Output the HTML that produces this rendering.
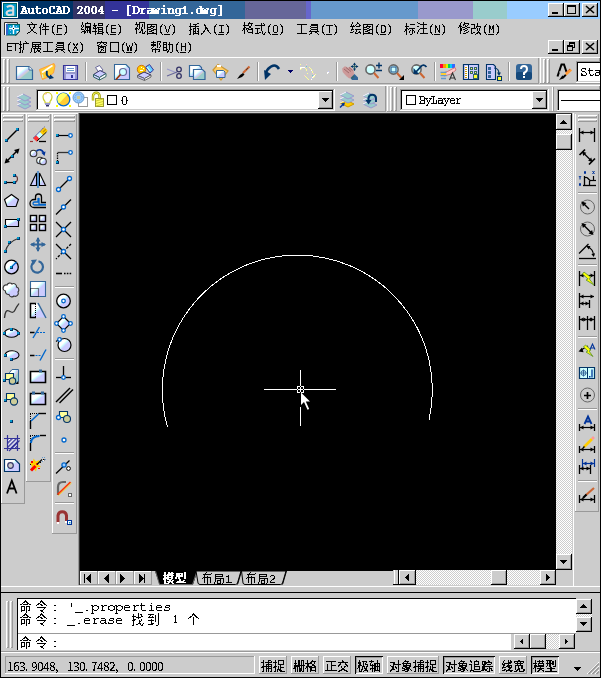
<!DOCTYPE html>
<html><head><meta charset="utf-8"><title>AutoCAD 2004 - [Drawing1.dwg]</title><style>
html,body{margin:0;padding:0;}
body{width:601px;height:678px;position:relative;overflow:hidden;background:#cccccc;font-family:"Liberation Sans",sans-serif;}
div{position:absolute;box-sizing:border-box;}
svg{position:absolute;overflow:visible;}
</style></head><body>
<div style="left:0px;top:0px;width:601px;height:678px;background:#cccccc;"></div>
<div style="left:1px;top:1px;width:72px;height:18px;background:#003366;"></div>
<div style="left:73px;top:1px;width:32px;height:18px;background:#333366;"></div>
<div style="left:105px;top:1px;width:44px;height:18px;background:#333399;"></div>
<div style="left:149px;top:1px;width:96px;height:18px;background:#336699;"></div>
<div style="left:245px;top:1px;width:61px;height:18px;background:#666699;"></div>
<div style="left:306px;top:1px;width:5px;height:18px;background:#6666cc;"></div>
<div style="left:311px;top:1px;width:107px;height:18px;background:#6699cc;"></div>
<div style="left:418px;top:1px;width:55px;height:18px;background:#9999cc;"></div>
<div style="left:473px;top:1px;width:34px;height:18px;background:#99cccc;"></div>
<div style="left:507px;top:1px;width:93px;height:18px;background:#99ccff;"></div>
<div style="left:0px;top:0px;width:601px;height:1px;background:#000000;"></div>
<div style="left:0px;top:0px;width:1px;height:678px;background:#000000;"></div>
<div style="left:600px;top:0px;width:1px;height:678px;background:#000000;"></div>
<div style="left:0px;top:677px;width:601px;height:1px;background:#000000;"></div>
<div style="left:548px;top:3px;width:16px;height:14px;background:#cccccc;"></div>
<div style="left:548px;top:3px;width:16px;height:1px;background:#ffffff;"></div>
<div style="left:548px;top:3px;width:1px;height:14px;background:#ffffff;"></div>
<div style="left:548px;top:16px;width:16px;height:1px;background:#000000;"></div>
<div style="left:563px;top:3px;width:1px;height:14px;background:#000000;"></div>
<div style="left:549px;top:15px;width:14px;height:1px;background:#999999;"></div>
<div style="left:562px;top:4px;width:1px;height:12px;background:#999999;"></div>
<div style="left:564px;top:3px;width:16px;height:14px;background:#cccccc;"></div>
<div style="left:564px;top:3px;width:16px;height:1px;background:#ffffff;"></div>
<div style="left:564px;top:3px;width:1px;height:14px;background:#ffffff;"></div>
<div style="left:564px;top:16px;width:16px;height:1px;background:#000000;"></div>
<div style="left:579px;top:3px;width:1px;height:14px;background:#000000;"></div>
<div style="left:565px;top:15px;width:14px;height:1px;background:#999999;"></div>
<div style="left:578px;top:4px;width:1px;height:12px;background:#999999;"></div>
<div style="left:582px;top:3px;width:16px;height:14px;background:#cccccc;"></div>
<div style="left:582px;top:3px;width:16px;height:1px;background:#ffffff;"></div>
<div style="left:582px;top:3px;width:1px;height:14px;background:#ffffff;"></div>
<div style="left:582px;top:16px;width:16px;height:1px;background:#000000;"></div>
<div style="left:597px;top:3px;width:1px;height:14px;background:#000000;"></div>
<div style="left:583px;top:15px;width:14px;height:1px;background:#999999;"></div>
<div style="left:596px;top:4px;width:1px;height:12px;background:#999999;"></div>
<div style="left:552px;top:12px;width:6px;height:2px;background:#000000;"></div>
<svg style="left:564px;top:3px" width="16" height="14" viewBox="0 0 16 14"><path d="M3.5 2.5h8v8h-8z" stroke="#000" fill="none" shape-rendering="crispEdges"/><path d="M3 3h9" stroke="#000" shape-rendering="crispEdges"/></svg>
<svg style="left:582px;top:3px" width="16" height="14" viewBox="0 0 16 14"><path d="M4 3l8 7M12 3l-8 7" stroke="#000" stroke-width="1.6" fill="none"/></svg>
<div style="left:548px;top:40px;width:16px;height:14px;background:#cccccc;"></div>
<div style="left:548px;top:40px;width:16px;height:1px;background:#ffffff;"></div>
<div style="left:548px;top:40px;width:1px;height:14px;background:#ffffff;"></div>
<div style="left:548px;top:53px;width:16px;height:1px;background:#000000;"></div>
<div style="left:563px;top:40px;width:1px;height:14px;background:#000000;"></div>
<div style="left:549px;top:52px;width:14px;height:1px;background:#999999;"></div>
<div style="left:562px;top:41px;width:1px;height:12px;background:#999999;"></div>
<div style="left:564px;top:40px;width:16px;height:14px;background:#cccccc;"></div>
<div style="left:564px;top:40px;width:16px;height:1px;background:#ffffff;"></div>
<div style="left:564px;top:40px;width:1px;height:14px;background:#ffffff;"></div>
<div style="left:564px;top:53px;width:16px;height:1px;background:#000000;"></div>
<div style="left:579px;top:40px;width:1px;height:14px;background:#000000;"></div>
<div style="left:565px;top:52px;width:14px;height:1px;background:#999999;"></div>
<div style="left:578px;top:41px;width:1px;height:12px;background:#999999;"></div>
<div style="left:582px;top:40px;width:16px;height:14px;background:#cccccc;"></div>
<div style="left:582px;top:40px;width:16px;height:1px;background:#ffffff;"></div>
<div style="left:582px;top:40px;width:1px;height:14px;background:#ffffff;"></div>
<div style="left:582px;top:53px;width:16px;height:1px;background:#000000;"></div>
<div style="left:597px;top:40px;width:1px;height:14px;background:#000000;"></div>
<div style="left:583px;top:52px;width:14px;height:1px;background:#999999;"></div>
<div style="left:596px;top:41px;width:1px;height:12px;background:#999999;"></div>
<div style="left:552px;top:49px;width:6px;height:2px;background:#000000;"></div>
<svg style="left:564px;top:40px" width="16" height="14" viewBox="0 0 16 14"><path d="M5 2h6v2h-6zM5 4h1v1h-1zM10 4h1v4h-1zM9 7h1v1h-1zM3 5h6v2h-6zM3 7h1v4h-1zM8 7h1v4h-1zM3 10h6v1h-6z" fill="#000"/></svg>
<svg style="left:582px;top:40px" width="16" height="14" viewBox="0 0 16 14"><path d="M4 3l8 7M12 3l-8 7" stroke="#000" stroke-width="1.6" fill="none"/></svg>
<div style="left:1px;top:57px;width:599px;height:1px;background:#ffffff;"></div>
<div style="left:538px;top:58px;width:1px;height:26px;background:#999999;"></div>
<div style="left:1px;top:83px;width:538px;height:1px;background:#999999;"></div>
<div style="left:3px;top:59px;width:1px;height:24px;background:#ffffff;"></div>
<div style="left:5px;top:59px;width:1px;height:24px;background:#999999;"></div>
<div style="left:3px;top:59px;width:2px;height:1px;background:#ffffff;"></div>
<div style="left:4px;top:82px;width:2px;height:1px;background:#999999;"></div>
<div style="left:7px;top:59px;width:1px;height:24px;background:#ffffff;"></div>
<div style="left:9px;top:59px;width:1px;height:24px;background:#999999;"></div>
<div style="left:7px;top:59px;width:2px;height:1px;background:#ffffff;"></div>
<div style="left:8px;top:82px;width:2px;height:1px;background:#999999;"></div>
<div style="left:540px;top:58px;width:1px;height:26px;background:#ffffff;"></div>
<div style="left:599px;top:58px;width:1px;height:26px;background:#999999;"></div>
<div style="left:540px;top:83px;width:60px;height:1px;background:#999999;"></div>
<div style="left:543px;top:59px;width:1px;height:24px;background:#ffffff;"></div>
<div style="left:545px;top:59px;width:1px;height:24px;background:#999999;"></div>
<div style="left:543px;top:59px;width:2px;height:1px;background:#ffffff;"></div>
<div style="left:544px;top:82px;width:2px;height:1px;background:#999999;"></div>
<div style="left:547px;top:59px;width:1px;height:24px;background:#ffffff;"></div>
<div style="left:549px;top:59px;width:1px;height:24px;background:#999999;"></div>
<div style="left:547px;top:59px;width:2px;height:1px;background:#ffffff;"></div>
<div style="left:548px;top:82px;width:2px;height:1px;background:#999999;"></div>
<div style="left:1px;top:85px;width:599px;height:1px;background:#ffffff;"></div>
<div style="left:385px;top:86px;width:1px;height:26px;background:#999999;"></div>
<div style="left:1px;top:111px;width:385px;height:1px;background:#999999;"></div>
<div style="left:3px;top:87px;width:1px;height:24px;background:#ffffff;"></div>
<div style="left:5px;top:87px;width:1px;height:24px;background:#999999;"></div>
<div style="left:3px;top:87px;width:2px;height:1px;background:#ffffff;"></div>
<div style="left:4px;top:110px;width:2px;height:1px;background:#999999;"></div>
<div style="left:7px;top:87px;width:1px;height:24px;background:#ffffff;"></div>
<div style="left:9px;top:87px;width:1px;height:24px;background:#999999;"></div>
<div style="left:7px;top:87px;width:2px;height:1px;background:#ffffff;"></div>
<div style="left:8px;top:110px;width:2px;height:1px;background:#999999;"></div>
<div style="left:387px;top:86px;width:1px;height:26px;background:#ffffff;"></div>
<div style="left:599px;top:86px;width:1px;height:26px;background:#999999;"></div>
<div style="left:387px;top:111px;width:213px;height:1px;background:#999999;"></div>
<div style="left:390px;top:87px;width:1px;height:24px;background:#ffffff;"></div>
<div style="left:392px;top:87px;width:1px;height:24px;background:#999999;"></div>
<div style="left:390px;top:87px;width:2px;height:1px;background:#ffffff;"></div>
<div style="left:391px;top:110px;width:2px;height:1px;background:#999999;"></div>
<div style="left:394px;top:87px;width:1px;height:24px;background:#ffffff;"></div>
<div style="left:396px;top:87px;width:1px;height:24px;background:#999999;"></div>
<div style="left:394px;top:87px;width:2px;height:1px;background:#ffffff;"></div>
<div style="left:395px;top:110px;width:2px;height:1px;background:#999999;"></div>
<div style="left:85px;top:62px;width:1px;height:19px;background:#999999;"></div>
<div style="left:86px;top:62px;width:1px;height:19px;background:#ffffff;"></div>
<div style="left:160px;top:62px;width:1px;height:19px;background:#999999;"></div>
<div style="left:161px;top:62px;width:1px;height:19px;background:#ffffff;"></div>
<div style="left:257px;top:62px;width:1px;height:19px;background:#999999;"></div>
<div style="left:258px;top:62px;width:1px;height:19px;background:#ffffff;"></div>
<div style="left:336px;top:62px;width:1px;height:19px;background:#999999;"></div>
<div style="left:337px;top:62px;width:1px;height:19px;background:#ffffff;"></div>
<div style="left:434px;top:62px;width:1px;height:19px;background:#999999;"></div>
<div style="left:435px;top:62px;width:1px;height:19px;background:#ffffff;"></div>
<div style="left:508px;top:62px;width:1px;height:19px;background:#999999;"></div>
<div style="left:509px;top:62px;width:1px;height:19px;background:#ffffff;"></div>
<div style="left:576px;top:61px;width:24px;height:22px;background:#ffffff;"></div>
<div style="left:576px;top:61px;width:24px;height:1px;background:#999999;"></div>
<div style="left:576px;top:61px;width:1px;height:22px;background:#999999;"></div>
<div style="left:577px;top:62px;width:23px;height:1px;background:#000000;"></div>
<div style="left:577px;top:62px;width:1px;height:20px;background:#000000;"></div>
<div style="left:577px;top:81px;width:23px;height:1px;background:#cccccc;"></div>
<div style="left:576px;top:82px;width:24px;height:1px;background:#ffffff;"></div>
<div style="left:36px;top:89px;width:299px;height:22px;background:#ffffff;"></div>
<div style="left:36px;top:89px;width:299px;height:1px;background:#999999;"></div>
<div style="left:36px;top:89px;width:1px;height:22px;background:#999999;"></div>
<div style="left:37px;top:90px;width:297px;height:1px;background:#000000;"></div>
<div style="left:37px;top:90px;width:1px;height:20px;background:#000000;"></div>
<div style="left:36px;top:110px;width:299px;height:1px;background:#ffffff;"></div>
<div style="left:334px;top:89px;width:1px;height:22px;background:#ffffff;"></div>
<div style="left:37px;top:109px;width:297px;height:1px;background:#cccccc;"></div>
<div style="left:333px;top:90px;width:1px;height:20px;background:#cccccc;"></div>
<div style="left:318px;top:91px;width:15px;height:18px;background:#cccccc;"></div>
<div style="left:318px;top:91px;width:15px;height:1px;background:#ffffff;"></div>
<div style="left:318px;top:91px;width:1px;height:18px;background:#ffffff;"></div>
<div style="left:318px;top:108px;width:15px;height:1px;background:#000000;"></div>
<div style="left:332px;top:91px;width:1px;height:18px;background:#000000;"></div>
<div style="left:319px;top:107px;width:13px;height:1px;background:#999999;"></div>
<div style="left:331px;top:92px;width:1px;height:16px;background:#999999;"></div>
<svg style="left:0px;top:0px" width="601" height="678" viewBox="0 0 601 678"><path fill="#000000" d="M322 98h7v1h-7zM323 99h5v1h-5zM324 100h3v1h-3zM325 101h1v1h-1z"/></svg>
<div style="left:400px;top:89px;width:149px;height:22px;background:#ffffff;"></div>
<div style="left:400px;top:89px;width:149px;height:1px;background:#999999;"></div>
<div style="left:400px;top:89px;width:1px;height:22px;background:#999999;"></div>
<div style="left:401px;top:90px;width:147px;height:1px;background:#000000;"></div>
<div style="left:401px;top:90px;width:1px;height:20px;background:#000000;"></div>
<div style="left:400px;top:110px;width:149px;height:1px;background:#ffffff;"></div>
<div style="left:548px;top:89px;width:1px;height:22px;background:#ffffff;"></div>
<div style="left:401px;top:109px;width:147px;height:1px;background:#cccccc;"></div>
<div style="left:547px;top:90px;width:1px;height:20px;background:#cccccc;"></div>
<div style="left:532px;top:91px;width:15px;height:18px;background:#cccccc;"></div>
<div style="left:532px;top:91px;width:15px;height:1px;background:#ffffff;"></div>
<div style="left:532px;top:91px;width:1px;height:18px;background:#ffffff;"></div>
<div style="left:532px;top:108px;width:15px;height:1px;background:#000000;"></div>
<div style="left:546px;top:91px;width:1px;height:18px;background:#000000;"></div>
<div style="left:533px;top:107px;width:13px;height:1px;background:#999999;"></div>
<div style="left:545px;top:92px;width:1px;height:16px;background:#999999;"></div>
<svg style="left:0px;top:0px" width="601" height="678" viewBox="0 0 601 678"><path fill="#000000" d="M536 98h7v1h-7zM537 99h5v1h-5zM538 100h3v1h-3zM539 101h1v1h-1z"/></svg>
<div style="left:406px;top:95px;width:10px;height:10px;background:#000000;"></div>
<div style="left:407px;top:96px;width:8px;height:8px;background:#ffffff;"></div>
<div style="left:552px;top:87px;width:1px;height:24px;background:#ffffff;"></div>
<div style="left:553px;top:87px;width:1px;height:24px;background:#999999;"></div>
<div style="left:557px;top:89px;width:43px;height:22px;background:#ffffff;"></div>
<div style="left:557px;top:89px;width:43px;height:1px;background:#999999;"></div>
<div style="left:557px;top:89px;width:1px;height:22px;background:#999999;"></div>
<div style="left:558px;top:90px;width:42px;height:1px;background:#000000;"></div>
<div style="left:558px;top:90px;width:1px;height:20px;background:#000000;"></div>
<div style="left:557px;top:110px;width:43px;height:1px;background:#ffffff;"></div>
<div style="left:561px;top:100px;width:39px;height:1px;background:#000000;"></div>
<div style="left:1px;top:113px;width:78px;height:1px;background:#ffffff;"></div>
<div style="left:1px;top:114px;width:1px;height:390px;background:#ffffff;"></div>
<div style="left:24px;top:114px;width:1px;height:390px;background:#999999;"></div>
<div style="left:1px;top:503px;width:24px;height:1px;background:#999999;"></div>
<div style="left:3px;top:115px;width:20px;height:1px;background:#ffffff;"></div>
<div style="left:3px;top:117px;width:20px;height:1px;background:#999999;"></div>
<div style="left:3px;top:115px;width:1px;height:2px;background:#ffffff;"></div>
<div style="left:22px;top:116px;width:1px;height:2px;background:#999999;"></div>
<div style="left:3px;top:119px;width:20px;height:1px;background:#ffffff;"></div>
<div style="left:3px;top:121px;width:20px;height:1px;background:#999999;"></div>
<div style="left:3px;top:119px;width:1px;height:2px;background:#ffffff;"></div>
<div style="left:22px;top:120px;width:1px;height:2px;background:#999999;"></div>
<div style="left:26px;top:114px;width:1px;height:368px;background:#ffffff;"></div>
<div style="left:50px;top:114px;width:1px;height:368px;background:#999999;"></div>
<div style="left:26px;top:481px;width:25px;height:1px;background:#999999;"></div>
<div style="left:28px;top:115px;width:21px;height:1px;background:#ffffff;"></div>
<div style="left:28px;top:117px;width:21px;height:1px;background:#999999;"></div>
<div style="left:28px;top:115px;width:1px;height:2px;background:#ffffff;"></div>
<div style="left:48px;top:116px;width:1px;height:2px;background:#999999;"></div>
<div style="left:28px;top:119px;width:21px;height:1px;background:#ffffff;"></div>
<div style="left:28px;top:121px;width:21px;height:1px;background:#999999;"></div>
<div style="left:28px;top:119px;width:1px;height:2px;background:#ffffff;"></div>
<div style="left:48px;top:120px;width:1px;height:2px;background:#999999;"></div>
<div style="left:52px;top:114px;width:1px;height:420px;background:#ffffff;"></div>
<div style="left:76px;top:114px;width:1px;height:420px;background:#999999;"></div>
<div style="left:52px;top:533px;width:25px;height:1px;background:#999999;"></div>
<div style="left:54px;top:115px;width:21px;height:1px;background:#ffffff;"></div>
<div style="left:54px;top:117px;width:21px;height:1px;background:#999999;"></div>
<div style="left:54px;top:115px;width:1px;height:2px;background:#ffffff;"></div>
<div style="left:74px;top:116px;width:1px;height:2px;background:#999999;"></div>
<div style="left:54px;top:119px;width:21px;height:1px;background:#ffffff;"></div>
<div style="left:54px;top:121px;width:21px;height:1px;background:#999999;"></div>
<div style="left:54px;top:119px;width:1px;height:2px;background:#ffffff;"></div>
<div style="left:74px;top:120px;width:1px;height:2px;background:#999999;"></div>
<div style="left:78px;top:113px;width:1px;height:472px;background:#999999;"></div>
<div style="left:79px;top:113px;width:493px;height:472px;background:#333333;"></div>
<div style="left:80px;top:114px;width:476px;height:457px;background:#000000;"></div>
<div style="left:556px;top:114px;width:16px;height:456px;background:repeating-conic-gradient(#ffffff 0 25%,#cccccc 0 50%) 0 0/2px 2px;"></div>
<div style="left:556px;top:114px;width:16px;height:16px;background:#cccccc;"></div>
<div style="left:556px;top:114px;width:16px;height:1px;background:#ffffff;"></div>
<div style="left:556px;top:114px;width:1px;height:16px;background:#ffffff;"></div>
<div style="left:556px;top:129px;width:16px;height:1px;background:#000000;"></div>
<div style="left:571px;top:114px;width:1px;height:16px;background:#000000;"></div>
<div style="left:557px;top:128px;width:14px;height:1px;background:#999999;"></div>
<div style="left:570px;top:115px;width:1px;height:14px;background:#999999;"></div>
<svg style="left:0px;top:0px" width="601" height="678" viewBox="0 0 601 678"><path fill="#000000" d="M563 120h1v1h-1zM562 121h3v1h-3zM561 122h5v1h-5zM560 123h7v1h-7z"/></svg>
<div style="left:556px;top:134px;width:16px;height:16px;background:#cccccc;"></div>
<div style="left:556px;top:134px;width:16px;height:1px;background:#ffffff;"></div>
<div style="left:556px;top:134px;width:1px;height:16px;background:#ffffff;"></div>
<div style="left:556px;top:149px;width:16px;height:1px;background:#000000;"></div>
<div style="left:571px;top:134px;width:1px;height:16px;background:#000000;"></div>
<div style="left:557px;top:148px;width:14px;height:1px;background:#999999;"></div>
<div style="left:570px;top:135px;width:1px;height:14px;background:#999999;"></div>
<div style="left:556px;top:554px;width:16px;height:16px;background:#cccccc;"></div>
<div style="left:556px;top:554px;width:16px;height:1px;background:#ffffff;"></div>
<div style="left:556px;top:554px;width:1px;height:16px;background:#ffffff;"></div>
<div style="left:556px;top:569px;width:16px;height:1px;background:#000000;"></div>
<div style="left:571px;top:554px;width:1px;height:16px;background:#000000;"></div>
<div style="left:557px;top:568px;width:14px;height:1px;background:#999999;"></div>
<div style="left:570px;top:555px;width:1px;height:14px;background:#999999;"></div>
<svg style="left:0px;top:0px" width="601" height="678" viewBox="0 0 601 678"><path fill="#000000" d="M560 560h7v1h-7zM561 561h5v1h-5zM562 562h3v1h-3zM563 563h1v1h-1z"/></svg>
<div style="left:573px;top:113px;width:1px;height:474px;background:#ffffff;"></div>
<div style="left:575px;top:114px;width:1px;height:398px;background:#ffffff;"></div>
<div style="left:598px;top:114px;width:1px;height:398px;background:#999999;"></div>
<div style="left:575px;top:511px;width:24px;height:1px;background:#999999;"></div>
<div style="left:578px;top:115px;width:19px;height:1px;background:#ffffff;"></div>
<div style="left:578px;top:117px;width:19px;height:1px;background:#999999;"></div>
<div style="left:578px;top:115px;width:1px;height:2px;background:#ffffff;"></div>
<div style="left:596px;top:116px;width:1px;height:2px;background:#999999;"></div>
<div style="left:578px;top:119px;width:19px;height:1px;background:#ffffff;"></div>
<div style="left:578px;top:121px;width:19px;height:1px;background:#999999;"></div>
<div style="left:578px;top:119px;width:1px;height:2px;background:#ffffff;"></div>
<div style="left:596px;top:120px;width:1px;height:2px;background:#999999;"></div>
<div style="left:80px;top:571px;width:314px;height:14px;background:#cccccc;"></div>
<div style="left:80px;top:571px;width:18px;height:14px;background:#cccccc;"></div>
<div style="left:80px;top:571px;width:18px;height:1px;background:#ffffff;"></div>
<div style="left:80px;top:571px;width:1px;height:14px;background:#ffffff;"></div>
<div style="left:80px;top:584px;width:18px;height:1px;background:#999999;"></div>
<div style="left:97px;top:571px;width:1px;height:14px;background:#999999;"></div>
<div style="left:98px;top:571px;width:18px;height:14px;background:#cccccc;"></div>
<div style="left:98px;top:571px;width:18px;height:1px;background:#ffffff;"></div>
<div style="left:98px;top:571px;width:1px;height:14px;background:#ffffff;"></div>
<div style="left:98px;top:584px;width:18px;height:1px;background:#999999;"></div>
<div style="left:115px;top:571px;width:1px;height:14px;background:#999999;"></div>
<div style="left:116px;top:571px;width:18px;height:14px;background:#cccccc;"></div>
<div style="left:116px;top:571px;width:18px;height:1px;background:#ffffff;"></div>
<div style="left:116px;top:571px;width:1px;height:14px;background:#ffffff;"></div>
<div style="left:116px;top:584px;width:18px;height:1px;background:#999999;"></div>
<div style="left:133px;top:571px;width:1px;height:14px;background:#999999;"></div>
<div style="left:134px;top:571px;width:18px;height:14px;background:#cccccc;"></div>
<div style="left:134px;top:571px;width:18px;height:1px;background:#ffffff;"></div>
<div style="left:134px;top:571px;width:1px;height:14px;background:#ffffff;"></div>
<div style="left:134px;top:584px;width:18px;height:1px;background:#999999;"></div>
<div style="left:151px;top:571px;width:1px;height:14px;background:#999999;"></div>
<svg style="left:0px;top:0px" width="601" height="678" viewBox="0 0 601 678"><path fill="#000000" d="M86 578h1v1h-1zM87 577h1v3h-1zM88 576h1v5h-1zM89 575h1v7h-1zM90 574h1v9h-1z"/></svg>
<div style="left:84px;top:574px;width:1px;height:9px;background:#000000;"></div>
<svg style="left:0px;top:0px" width="601" height="678" viewBox="0 0 601 678"><path fill="#000000" d="M104 578h1v1h-1zM105 577h1v3h-1zM106 576h1v5h-1zM107 575h1v7h-1zM108 574h1v9h-1z"/></svg>
<svg style="left:0px;top:0px" width="601" height="678" viewBox="0 0 601 678"><path fill="#000000" d="M124 578h1v1h-1zM123 577h1v3h-1zM122 576h1v5h-1zM121 575h1v7h-1zM120 574h1v9h-1z"/></svg>
<svg style="left:0px;top:0px" width="601" height="678" viewBox="0 0 601 678"><path fill="#000000" d="M143 578h1v1h-1zM142 577h1v3h-1zM141 576h1v5h-1zM140 575h1v7h-1zM139 574h1v9h-1z"/></svg>
<div style="left:144px;top:574px;width:1px;height:9px;background:#000000;"></div>
<div style="left:556px;top:570px;width:17px;height:15px;background:#cccccc;"></div>
<div style="left:394px;top:570px;width:162px;height:15px;background:#cccccc;"></div>
<div style="left:416px;top:570px;width:124px;height:15px;background:repeating-conic-gradient(#ffffff 0 25%,#cccccc 0 50%) 0 0/2px 2px;"></div>
<div style="left:393px;top:570px;width:6px;height:15px;background:#cccccc;"></div>
<div style="left:394px;top:570px;width:1px;height:15px;background:#ffffff;"></div>
<div style="left:398px;top:570px;width:1px;height:15px;background:#000000;"></div>
<div style="left:393px;top:584px;width:6px;height:1px;background:#000000;"></div>
<div style="left:399px;top:570px;width:17px;height:15px;background:#cccccc;"></div>
<div style="left:399px;top:570px;width:17px;height:1px;background:#ffffff;"></div>
<div style="left:399px;top:570px;width:1px;height:15px;background:#ffffff;"></div>
<div style="left:399px;top:584px;width:17px;height:1px;background:#000000;"></div>
<div style="left:415px;top:570px;width:1px;height:15px;background:#000000;"></div>
<div style="left:400px;top:583px;width:15px;height:1px;background:#999999;"></div>
<div style="left:414px;top:571px;width:1px;height:13px;background:#999999;"></div>
<svg style="left:0px;top:0px" width="601" height="678" viewBox="0 0 601 678"><path fill="#000000" d="M405 577h1v1h-1zM406 576h1v3h-1zM407 575h1v5h-1zM408 574h1v7h-1z"/></svg>
<div style="left:491px;top:570px;width:16px;height:15px;background:#cccccc;"></div>
<div style="left:491px;top:570px;width:16px;height:1px;background:#ffffff;"></div>
<div style="left:491px;top:570px;width:1px;height:15px;background:#ffffff;"></div>
<div style="left:491px;top:584px;width:16px;height:1px;background:#000000;"></div>
<div style="left:506px;top:570px;width:1px;height:15px;background:#000000;"></div>
<div style="left:492px;top:583px;width:14px;height:1px;background:#999999;"></div>
<div style="left:505px;top:571px;width:1px;height:13px;background:#999999;"></div>
<div style="left:540px;top:570px;width:16px;height:15px;background:#cccccc;"></div>
<div style="left:540px;top:570px;width:16px;height:1px;background:#ffffff;"></div>
<div style="left:540px;top:570px;width:1px;height:15px;background:#ffffff;"></div>
<div style="left:540px;top:584px;width:16px;height:1px;background:#000000;"></div>
<div style="left:555px;top:570px;width:1px;height:15px;background:#000000;"></div>
<div style="left:541px;top:583px;width:14px;height:1px;background:#999999;"></div>
<div style="left:554px;top:571px;width:1px;height:13px;background:#999999;"></div>
<svg style="left:0px;top:0px" width="601" height="678" viewBox="0 0 601 678"><path fill="#000000" d="M549 577h1v1h-1zM548 576h1v3h-1zM547 575h1v5h-1zM546 574h1v7h-1z"/></svg>
<div style="left:1px;top:586px;width:599px;height:1px;background:#ffffff;"></div>
<svg style="left:0px;top:0px" width="601" height="678" viewBox="0 0 601 678"><path d="M167.5 427 A135 135 0 1 1 429 420" fill="none" stroke="#fff" stroke-width="1" shape-rendering="crispEdges"/>
<path d="M264 389.5H336M300.5 370V392.5M300.5 407V426" stroke="#fff" stroke-width="1" shape-rendering="crispEdges"/>
<rect x="297.5" y="386.5" width="6" height="6" fill="none" stroke="#fff" stroke-width="1" shape-rendering="crispEdges"/>
<path d="M300 386h1v1h-1zM300 392h1v1h-1zM297 389h1v1h-1zM303 389h1v1h-1z" fill="#000"/>
<path d="M301 392.5L301 405L304 402L307.5 409.8L309.2 409L305.8 401.5L310 401.5Z" fill="#fff"/></svg>
<div style="left:1px;top:592px;width:599px;height:1px;background:#000000;"></div>
<div style="left:17px;top:598px;width:559px;height:52px;background:#ffffff;"></div>
<div style="left:17px;top:598px;width:559px;height:1px;background:#000000;"></div>
<div style="left:17px;top:598px;width:1px;height:52px;background:#000000;"></div>
<div style="left:18px;top:633px;width:558px;height:1px;background:#999999;"></div>
<div style="left:6px;top:601px;width:1px;height:47px;background:#ffffff;"></div>
<div style="left:8px;top:601px;width:1px;height:47px;background:#999999;"></div>
<div style="left:6px;top:601px;width:2px;height:1px;background:#ffffff;"></div>
<div style="left:7px;top:647px;width:2px;height:1px;background:#999999;"></div>
<div style="left:10px;top:601px;width:1px;height:47px;background:#ffffff;"></div>
<div style="left:12px;top:601px;width:1px;height:47px;background:#999999;"></div>
<div style="left:10px;top:601px;width:2px;height:1px;background:#ffffff;"></div>
<div style="left:11px;top:647px;width:2px;height:1px;background:#999999;"></div>
<div style="left:576px;top:598px;width:24px;height:36px;background:#cccccc;"></div>
<div style="left:576px;top:599px;width:16px;height:15px;background:#cccccc;"></div>
<div style="left:576px;top:599px;width:16px;height:1px;background:#ffffff;"></div>
<div style="left:576px;top:599px;width:1px;height:15px;background:#ffffff;"></div>
<div style="left:576px;top:613px;width:16px;height:1px;background:#000000;"></div>
<div style="left:591px;top:599px;width:1px;height:15px;background:#000000;"></div>
<div style="left:577px;top:612px;width:14px;height:1px;background:#999999;"></div>
<div style="left:590px;top:600px;width:1px;height:13px;background:#999999;"></div>
<svg style="left:0px;top:0px" width="601" height="678" viewBox="0 0 601 678"><path fill="#000000" d="M583 604h1v1h-1zM582 605h3v1h-3zM581 606h5v1h-5zM580 607h7v1h-7z"/></svg>
<div style="left:576px;top:614px;width:16px;height:3px;background:repeating-conic-gradient(#ffffff 0 25%,#cccccc 0 50%) 0 0/2px 2px;"></div>
<div style="left:576px;top:617px;width:16px;height:15px;background:#cccccc;"></div>
<div style="left:576px;top:617px;width:16px;height:1px;background:#ffffff;"></div>
<div style="left:576px;top:617px;width:1px;height:15px;background:#ffffff;"></div>
<div style="left:576px;top:631px;width:16px;height:1px;background:#000000;"></div>
<div style="left:591px;top:617px;width:1px;height:15px;background:#000000;"></div>
<div style="left:577px;top:630px;width:14px;height:1px;background:#999999;"></div>
<div style="left:590px;top:618px;width:1px;height:13px;background:#999999;"></div>
<svg style="left:0px;top:0px" width="601" height="678" viewBox="0 0 601 678"><path fill="#000000" d="M580 622h7v1h-7zM581 623h5v1h-5zM582 624h3v1h-3zM583 625h1v1h-1z"/></svg>
<div style="left:511px;top:634px;width:65px;height:16px;background:#cccccc;"></div>
<div style="left:514px;top:634px;width:16px;height:15px;background:#cccccc;"></div>
<div style="left:514px;top:634px;width:16px;height:1px;background:#ffffff;"></div>
<div style="left:514px;top:634px;width:1px;height:15px;background:#ffffff;"></div>
<div style="left:514px;top:648px;width:16px;height:1px;background:#000000;"></div>
<div style="left:529px;top:634px;width:1px;height:15px;background:#000000;"></div>
<div style="left:515px;top:647px;width:14px;height:1px;background:#999999;"></div>
<div style="left:528px;top:635px;width:1px;height:13px;background:#999999;"></div>
<svg style="left:0px;top:0px" width="601" height="678" viewBox="0 0 601 678"><path fill="#000000" d="M520 641h1v1h-1zM521 640h1v3h-1zM522 639h1v5h-1z"/></svg>
<div style="left:530px;top:634px;width:16px;height:15px;background:#cccccc;"></div>
<div style="left:530px;top:634px;width:16px;height:1px;background:#ffffff;"></div>
<div style="left:530px;top:634px;width:1px;height:15px;background:#ffffff;"></div>
<div style="left:530px;top:648px;width:16px;height:1px;background:#000000;"></div>
<div style="left:545px;top:634px;width:1px;height:15px;background:#000000;"></div>
<div style="left:531px;top:647px;width:14px;height:1px;background:#999999;"></div>
<div style="left:544px;top:635px;width:1px;height:13px;background:#999999;"></div>
<div style="left:546px;top:634px;width:13px;height:15px;background:repeating-conic-gradient(#ffffff 0 25%,#cccccc 0 50%) 0 0/2px 2px;"></div>
<div style="left:559px;top:634px;width:16px;height:15px;background:#cccccc;"></div>
<div style="left:559px;top:634px;width:16px;height:1px;background:#ffffff;"></div>
<div style="left:559px;top:634px;width:1px;height:15px;background:#ffffff;"></div>
<div style="left:559px;top:648px;width:16px;height:1px;background:#000000;"></div>
<div style="left:574px;top:634px;width:1px;height:15px;background:#000000;"></div>
<div style="left:560px;top:647px;width:14px;height:1px;background:#999999;"></div>
<div style="left:573px;top:635px;width:1px;height:13px;background:#999999;"></div>
<svg style="left:0px;top:0px" width="601" height="678" viewBox="0 0 601 678"><path fill="#000000" d="M567 641h1v1h-1zM566 640h1v3h-1zM565 639h1v5h-1z"/></svg>
<div style="left:1px;top:651px;width:599px;height:1px;background:#999999;"></div>
<div style="left:1px;top:652px;width:599px;height:1px;background:#ffffff;"></div>
<div style="left:5px;top:656px;width:250px;height:18px;background:#cccccc;"></div>
<div style="left:5px;top:656px;width:250px;height:1px;background:#999999;"></div>
<div style="left:5px;top:656px;width:1px;height:18px;background:#999999;"></div>
<div style="left:5px;top:673px;width:250px;height:1px;background:#ffffff;"></div>
<div style="left:254px;top:656px;width:1px;height:18px;background:#ffffff;"></div>
<div style="left:259px;top:656px;width:28px;height:18px;background:#cccccc;"></div>
<div style="left:259px;top:656px;width:28px;height:1px;background:#ffffff;"></div>
<div style="left:259px;top:656px;width:1px;height:18px;background:#ffffff;"></div>
<div style="left:259px;top:673px;width:28px;height:1px;background:#999999;"></div>
<div style="left:286px;top:656px;width:1px;height:18px;background:#999999;"></div>
<div style="left:291px;top:656px;width:28px;height:18px;background:#cccccc;"></div>
<div style="left:291px;top:656px;width:28px;height:1px;background:#ffffff;"></div>
<div style="left:291px;top:656px;width:1px;height:18px;background:#ffffff;"></div>
<div style="left:291px;top:673px;width:28px;height:1px;background:#999999;"></div>
<div style="left:318px;top:656px;width:1px;height:18px;background:#999999;"></div>
<div style="left:323px;top:656px;width:28px;height:18px;background:#cccccc;"></div>
<div style="left:323px;top:656px;width:28px;height:1px;background:#ffffff;"></div>
<div style="left:323px;top:656px;width:1px;height:18px;background:#ffffff;"></div>
<div style="left:323px;top:673px;width:28px;height:1px;background:#999999;"></div>
<div style="left:350px;top:656px;width:1px;height:18px;background:#999999;"></div>
<div style="left:355px;top:656px;width:28px;height:18px;background:#ffffff;"></div>
<div style="left:355px;top:656px;width:28px;height:1px;background:#000000;"></div>
<div style="left:355px;top:656px;width:1px;height:18px;background:#000000;"></div>
<div style="left:356px;top:657px;width:26px;height:1px;background:#999999;"></div>
<div style="left:356px;top:657px;width:1px;height:16px;background:#999999;"></div>
<div style="left:357px;top:658px;width:25px;height:15px;background:#cccccc;"></div>
<div style="left:387px;top:656px;width:52px;height:18px;background:#cccccc;"></div>
<div style="left:387px;top:656px;width:52px;height:1px;background:#ffffff;"></div>
<div style="left:387px;top:656px;width:1px;height:18px;background:#ffffff;"></div>
<div style="left:387px;top:673px;width:52px;height:1px;background:#999999;"></div>
<div style="left:438px;top:656px;width:1px;height:18px;background:#999999;"></div>
<div style="left:443px;top:656px;width:52px;height:18px;background:#ffffff;"></div>
<div style="left:443px;top:656px;width:52px;height:1px;background:#000000;"></div>
<div style="left:443px;top:656px;width:1px;height:18px;background:#000000;"></div>
<div style="left:444px;top:657px;width:50px;height:1px;background:#999999;"></div>
<div style="left:444px;top:657px;width:1px;height:16px;background:#999999;"></div>
<div style="left:445px;top:658px;width:49px;height:15px;background:#cccccc;"></div>
<div style="left:499px;top:656px;width:28px;height:18px;background:#cccccc;"></div>
<div style="left:499px;top:656px;width:28px;height:1px;background:#ffffff;"></div>
<div style="left:499px;top:656px;width:1px;height:18px;background:#ffffff;"></div>
<div style="left:499px;top:673px;width:28px;height:1px;background:#999999;"></div>
<div style="left:526px;top:656px;width:1px;height:18px;background:#999999;"></div>
<div style="left:531px;top:656px;width:28px;height:18px;background:#ffffff;"></div>
<div style="left:531px;top:656px;width:28px;height:1px;background:#000000;"></div>
<div style="left:531px;top:656px;width:1px;height:18px;background:#000000;"></div>
<div style="left:532px;top:657px;width:26px;height:1px;background:#999999;"></div>
<div style="left:532px;top:657px;width:1px;height:16px;background:#999999;"></div>
<div style="left:533px;top:658px;width:25px;height:15px;background:#cccccc;"></div>
<svg style="left:0px;top:0px" width="601" height="678" viewBox="0 0 601 678"><path fill="#000000" d="M574 667h7v1h-7zM575 668h5v1h-5zM576 669h3v1h-3zM577 670h1v1h-1z"/></svg>
<svg style="left:586px;top:661px" width="14" height="14" viewBox="0 0 14 14"><path d="M1 13L13 1M5 13L13 5M9 13L13 9" stroke="#fff" stroke-width="1" fill="none"/><path d="M2.5 13L13 2.5M6.5 13L13 6.5M10.5 13L13 10.5" stroke="#999" stroke-width="1.6" fill="none"/></svg>
<svg style="left:0;top:0" width="601" height="678" viewBox="0 0 601 678"><defs>
<linearGradient id="gL" x1="0" y1="0" x2="1" y2="1">
<stop offset="0" stop-color="#ffffff"/><stop offset="0.38" stop-color="#ffffff"/><stop offset="0.45" stop-color="#ccffff"/><stop offset="0.55" stop-color="#ccccff"/><stop offset="1" stop-color="#ccccff"/></linearGradient>
<linearGradient id="gT" x1="0" y1="0" x2="1" y2="1">
<stop offset="0" stop-color="#ffffff"/><stop offset="0.3" stop-color="#ffffff"/><stop offset="0.38" stop-color="#ccffff"/><stop offset="0.45" stop-color="#ccccff"/><stop offset="0.55" stop-color="#cccccc"/><stop offset="0.6" stop-color="#99cccc"/><stop offset="1" stop-color="#99cccc"/></linearGradient>
<pattern id="hatch" width="3" height="3" patternUnits="userSpaceOnUse" patternTransform="rotate(45)"><rect width="3" height="3" fill="#ffffff"/><rect width="1.5" height="3" fill="#333399"/></pattern>
</defs><path d="M6.5 140.5L17.5 129.5" stroke="#000" stroke-width="1.4" fill="none" /><rect x="5" y="139" width="3" height="3" fill="#003366"/><rect x="5" y="139" width="2" height="2" fill="#0099cc"/><rect x="16" y="128" width="3" height="3" fill="#003366"/><rect x="16" y="128" width="2" height="2" fill="#0099cc"/><path d="M6 162L18 150" stroke="#000" stroke-width="1.4" fill="none" /><path d="M4.50 163.50L6.09 158.02L9.98 161.91Z" fill="#000"/><path d="M19.50 148.50L17.91 153.98L14.02 150.09Z" fill="#000"/><rect x="11" y="155" width="3" height="3" fill="#003366"/><rect x="11" y="155" width="2" height="2" fill="#0099cc"/><path d="M5 182.5L14 182.5" stroke="#000" stroke-width="1.2" fill="none" /><path d="M14 175.5A3.5 3.5 0 0 1 14 182.5" fill="none" stroke="#663333" stroke-width="1.2" /><rect x="4" y="181" width="3" height="3" fill="#003366"/><rect x="4" y="181" width="2" height="2" fill="#0099cc"/><rect x="13" y="181" width="3" height="3" fill="#003366"/><rect x="13" y="181" width="2" height="2" fill="#0099cc"/><rect x="13" y="174" width="3" height="3" fill="#003366"/><rect x="13" y="174" width="2" height="2" fill="#0099cc"/><path d="M11.5 194.5L18.5 199.5L16 206.5L7 206.5L4.5 199.5Z" fill="url(#gL)" stroke="#000" stroke-width="1.1" /><path d="M5.5 219.5h13v7h-13z" fill="url(#gL)" stroke="#000" stroke-width="1.1" /><rect x="4" y="225" width="3" height="3" fill="#003366"/><rect x="4" y="225" width="2" height="2" fill="#0099cc"/><rect x="17" y="218" width="3" height="3" fill="#003366"/><rect x="17" y="218" width="2" height="2" fill="#0099cc"/><path d="M5.5 251Q8 242 18 238.5" fill="none" stroke="#333" stroke-width="1.2" /><rect x="4" y="250" width="3" height="3" fill="#003366"/><rect x="4" y="250" width="2" height="2" fill="#0099cc"/><rect x="8" y="241" width="3" height="3" fill="#003366"/><rect x="8" y="241" width="2" height="2" fill="#0099cc"/><rect x="17" y="237" width="3" height="3" fill="#003366"/><rect x="17" y="237" width="2" height="2" fill="#0099cc"/><circle cx="11.5" cy="267" r="6.8" fill="url(#gL)" stroke="#000" stroke-width="1.3"/><path d="M11.5 267L16.5 262" stroke="#0066cc" stroke-width="1.4" fill="none" /><rect x="10" y="266" width="3" height="3" fill="#003366"/><rect x="10" y="266" width="2" height="2" fill="#0099cc"/><path d="M7 285A3 3 0 0 1 12 284A3 3 0 0 1 16.5 287A3 3 0 0 1 18 292A3 3 0 0 1 14 296A3 3 0 0 1 9 294.5A3 3 0 0 1 5.5 291A3 3 0 0 1 7 285Z" fill="url(#gL)" stroke="#333" stroke-width="1.1" /><path d="M4.5 318C5 312 6.5 309.5 9 311S13.5 313.5 15 310S17.5 306 19 303.5" fill="none" stroke="#333" stroke-width="1.3" /><ellipse cx="11.5" cy="333" rx="7" ry="4.3" fill="url(#gL)" stroke="#000" stroke-width="1.1"/><rect x="3" y="332" width="3" height="3" fill="#003366"/><rect x="3" y="332" width="2" height="2" fill="#0099cc"/><rect x="17" y="332" width="3" height="3" fill="#003366"/><rect x="17" y="332" width="2" height="2" fill="#0099cc"/><rect x="10" y="328" width="3" height="3" fill="#003366"/><rect x="10" y="328" width="2" height="2" fill="#0099cc"/><path d="M5 355A7 4.3 0 1 1 11.5 359.3" fill="url(#gL)" stroke="#000" stroke-width="1.1" /><rect x="4" y="354" width="3" height="3" fill="#003366"/><rect x="4" y="354" width="2" height="2" fill="#0099cc"/><rect x="10" y="358" width="3" height="3" fill="#003366"/><rect x="10" y="358" width="2" height="2" fill="#0099cc"/><path d="M9.5 372.5L12 369.5H18.5V381L15.5 384H9.5Z" fill="url(#gT)" stroke="#336699" stroke-width="1" /><path d="M15.5 384L18.5 381V384Z" fill="#000" stroke="none" stroke-width="1" /><path d="M5.5 373.5h8v6h-8z" fill="#ffff99" stroke="#003366" stroke-width="1.1" /><circle cx="12.5" cy="381" r="3.2" fill="#cccc99" stroke="#003366" stroke-width="1.1"/><rect x="3" y="379" width="3" height="3" fill="#003366"/><rect x="3" y="379" width="2" height="2" fill="#0099cc"/><path d="M6.5 393.5h8v6h-8z" fill="#ffff99" stroke="#003366" stroke-width="1.1" /><circle cx="14" cy="401.5" r="3.6" fill="#cccc99" stroke="#003366" stroke-width="1.1"/><rect x="4" y="399" width="3" height="3" fill="#003366"/><rect x="4" y="399" width="2" height="2" fill="#0099cc"/><rect x="10" y="420" width="3" height="3" fill="#003366"/><rect x="10" y="420" width="2" height="2" fill="#0099cc"/><path d="M7 438h10v10h-10z" fill="url(#hatch)" stroke="none" stroke-width="1" /><path d="M4 438.5H20M4 448.5H20M7.5 435V451M17.5 435V451" fill="none" stroke="#333399" stroke-width="1.2" /><path d="M9 451L19.5 440.5" stroke="#333399" stroke-width="1.1" fill="none" /><path d="M4.5 459.5H15L19.5 464V471.5H4.5Z" fill="url(#gL)" stroke="#003366" stroke-width="1.2" /><circle cx="10.5" cy="465.5" r="2.8" fill="#cccccc" stroke="#333366" stroke-width="1.2"/><path d="M7 493.5L11.8 480.5L16.6 493.5M8.8 488.5H14.8" fill="none" stroke="#000" stroke-width="1.8" /><path d="M30 141.5L33 141.5" stroke="#993333" stroke-width="1.2" fill="none" /><path d="M39 141.5L46 141.5" stroke="#000" stroke-width="1.3" fill="none" /><path d="M35 140L38 137" stroke="#ff3333" stroke-width="5" fill="none" /><path d="M38 137L41.5 133.5" stroke="#ccffff" stroke-width="5" fill="none" /><path d="M41.5 133.5L46 129" stroke="#ffcc00" stroke-width="5" fill="none" /><path d="M43 132L46 129" stroke="#cc9900" stroke-width="1.5" fill="none" /><path d="M33.2 138.2L44.5 126.9" stroke="#333399" stroke-width="1" fill="none" stroke-dasharray="1 0.5"/><path d="M37 141L46.5 132" stroke="#000" stroke-width="0.9" fill="none" /><circle cx="33.5" cy="153.5" r="3.3" fill="url(#gL)" stroke="#333" stroke-width="1.1"/><path d="M36.5 151Q41 148 43.5 152.5" fill="none" stroke="#003399" stroke-width="1.6" /><path d="M44.50 156.00L41.34 152.71L45.59 151.57Z" fill="#003399"/><circle cx="40" cy="160.5" r="3.3" fill="url(#gL)" stroke="#333" stroke-width="1.1"/><circle cx="43" cy="161.5" r="3.3" fill="url(#gL)" stroke="#333" stroke-width="1.1"/><path d="M36.5 173V185.5H30.5Z" fill="url(#gL)" stroke="#000" stroke-width="1.1" /><path d="M39.5 173V185.5H45.5Z" fill="url(#gL)" stroke="#000" stroke-width="1.1" /><path d="M38 171L38 188" stroke="#0066cc" stroke-width="1.1" fill="none" /><path d="M46 207.5H34A4 4 0 0 1 34 199.5H35.5V197A3 3 0 0 1 41.5 197V202.5H46" fill="none" stroke="#000" stroke-width="1.3" /><path d="M46 205H34.5A1.5 1.5 0 0 1 34.5 202H38V198.5A0.8 0.8 0 0 1 39 198.5V204.5H46" fill="none" stroke="#0066cc" stroke-width="1.3" /><rect x="30.5" y="215.5" width="6" height="6" fill="url(#gL)" stroke="#000" stroke-width="1.4"/><rect x="39.5" y="215.5" width="6" height="6" fill="url(#gL)" stroke="#000" stroke-width="1.4"/><rect x="30.5" y="224.5" width="6" height="6" fill="url(#gL)" stroke="#000" stroke-width="1.4"/><rect x="39.5" y="224.5" width="6" height="6" fill="url(#gL)" stroke="#000" stroke-width="1.4"/><path d="M31 244.5H45M38 238V251" fill="none" stroke="#336699" stroke-width="2" /><path d="M30.00 244.50L34.50 242.03L34.50 246.97Z" fill="#336699"/><path d="M46.00 244.50L41.50 246.97L41.50 242.03Z" fill="#336699"/><path d="M38.00 237.00L40.48 241.50L35.52 241.50Z" fill="#336699"/><path d="M38.00 252.00L35.52 247.50L40.48 247.50Z" fill="#336699"/><path d="M34 262A5.8 5.8 0 1 0 38.5 261.2" fill="none" stroke="#336699" stroke-width="2.2" /><path d="M31 260L37 259.5L33.5 265Z" fill="#336699" stroke="none" stroke-width="1" /><path d="M30.5 281.5h15v15h-15z" fill="url(#gL)" stroke="#336699" stroke-width="1.1" /><path d="M30.5 288.5h8v8h-8z" fill="none" stroke="#000" stroke-width="1.1" stroke-dasharray="1 1"/><path d="M30.5 303.5H37L46 317.5H30.5Z" fill="url(#gL)" stroke="none" stroke-width="1" /><path d="M36 303.5H30.5V317.5H36" fill="none" stroke="#000" stroke-width="1.5" /><path d="M38 303L46 318" stroke="#336699" stroke-width="1.4" fill="none" /><path d="M35.5 304L35.5 317" stroke="#000" stroke-width="1" fill="none" stroke-dasharray="1 1"/><path d="M30 332.5L34.5 332.5" stroke="#000" stroke-width="1.5" fill="none" /><path d="M37 332.5L46 332.5" stroke="#0066cc" stroke-width="1.2" fill="none" stroke-dasharray="2 1"/><path d="M33 338L39.5 327" stroke="#0066cc" stroke-width="1.4" fill="none" /><path d="M30 355.5L34.5 355.5" stroke="#000" stroke-width="1.5" fill="none" /><path d="M35.5 355.5L41 355.5" stroke="#0066cc" stroke-width="1.2" fill="none" stroke-dasharray="2 1"/><path d="M40 360.5L46 349.5" stroke="#0066cc" stroke-width="1.4" fill="none" /><path d="M30.5 371.5h15v11h-15z" fill="url(#gL)" stroke="#000" stroke-width="1.6" /><rect x="39" y="369.5" width="3" height="3" fill="#336699"/><path d="M30.5 393.5h15v11h-15z" fill="url(#gL)" stroke="#000" stroke-width="1.6" /><rect x="32" y="391.5" width="3" height="3" fill="#336699"/><rect x="41" y="391.5" width="3" height="3" fill="#336699"/><path d="M38.5 413.5L46 413.5" stroke="#000" stroke-width="1.4" fill="none" /><path d="M30.5 421L30.5 429" stroke="#000" stroke-width="1.4" fill="none" /><path d="M30 413.5H38.5M30.5 414V421" fill="none" stroke="#000" stroke-width="1" stroke-dasharray="1 1"/><path d="M31 421L38.5 414" stroke="#0066cc" stroke-width="1.6" fill="none" /><path d="M40 435.5L46 435.5" stroke="#000" stroke-width="1.4" fill="none" /><path d="M30.5 443L30.5 451" stroke="#000" stroke-width="1.4" fill="none" /><path d="M30 435.5H40M30.5 436V443" fill="none" stroke="#000" stroke-width="1" stroke-dasharray="1 1"/><path d="M31 443Q31 436.5 39.5 436" fill="none" stroke="#0066cc" stroke-width="2" /><path d="M29.5 463L33 462L33.5 458.5L36 461.5L39.5 460L38 464L41 467L37 467.5L36 471.5L33.5 468.5L30 470.5L32 466.5Z" fill="#ffcc00" stroke="none" stroke-width="1" /><rect x="31" y="461" width="2" height="2" fill="#ff0000"/><rect x="36" y="463" width="2" height="2" fill="#ff3300"/><rect x="34" y="466" width="1" height="1" fill="#fff"/><rect x="38" y="468" width="2" height="1" fill="#ff0000"/><rect x="30" y="464" width="1" height="1" fill="#000"/><rect x="40" y="462" width="1" height="1" fill="#000"/><path d="M31 470.5L35.5 466" stroke="#ff0000" stroke-width="3" fill="none" /><path d="M37 464.5L42 459.5" stroke="#000" stroke-width="1.1" fill="none" /><rect x="42" y="457" width="1" height="1" fill="#6699cc"/><rect x="45" y="459" width="1" height="1" fill="#6699cc"/><rect x="42" y="461" width="1" height="1" fill="#6699cc"/><rect x="44" y="457" width="1" height="1" fill="#6699cc"/><rect x="43" y="459" width="1.5" height="1.5" fill="#000"/><rect x="43" y="460" width="1" height="1" fill="#fff"/><path d="M58 135.5L69 135.5" stroke="#000" stroke-width="1.2" fill="none" /><rect x="56" y="134" width="3" height="3" fill="#003366"/><rect x="56" y="134" width="2" height="2" fill="#0099cc"/><circle cx="70.5" cy="135.5" r="1.8" fill="#fff" stroke="#0066cc" stroke-width="1.3"/><path d="M57.5 152.5H69" fill="none" stroke="#333" stroke-width="1.3" /><path d="M57.5 153V161" fill="none" stroke="#000" stroke-width="1.3" stroke-dasharray="1.3 1"/><circle cx="70.5" cy="152.5" r="1.8" fill="#fff" stroke="#0066cc" stroke-width="1.3"/><rect x="56" y="161" width="3" height="3" fill="#003366"/><rect x="56" y="161" width="2" height="2" fill="#0099cc"/><path d="M58.5 189.5L69.5 178.5" stroke="#000" stroke-width="1.2" fill="none" /><circle cx="58.5" cy="189.5" r="2" fill="#fff" stroke="#0066cc" stroke-width="1.3"/><circle cx="69.5" cy="178.5" r="2" fill="#fff" stroke="#0066cc" stroke-width="1.3"/><path d="M56 214.5L71 199.5" stroke="#000" stroke-width="1.3" fill="none" /><circle cx="63.5" cy="207" r="2" fill="#fff" stroke="#0066cc" stroke-width="1.3"/><path d="M56 222L71 237" stroke="#000" stroke-width="1.3" fill="none" /><path d="M71 222L56 237" stroke="#000" stroke-width="1.3" fill="none" /><circle cx="63.5" cy="229.5" r="2" fill="#fff" stroke="#0066cc" stroke-width="1.3"/><path d="M56 244L71 259" stroke="#000" stroke-width="1.3" fill="none" /><path d="M71 244L56 259" stroke="#000" stroke-width="1.3" fill="none" stroke-dasharray="2.5 1.5"/><circle cx="63.5" cy="251.5" r="2" fill="#fff" stroke="#0066cc" stroke-width="1.3"/><path d="M56 273.5L62 273.5" stroke="#000" stroke-width="1.6" fill="none" /><path d="M64 273.5L72 273.5" stroke="#000" stroke-width="1.6" fill="none" stroke-dasharray="1.6 1.2"/><circle cx="63.5" cy="301" r="6.8" fill="url(#gL)" stroke="#000" stroke-width="1.3"/><circle cx="63.5" cy="301" r="1.8" fill="#fff" stroke="#0066cc" stroke-width="1.3"/><path d="M63.5 316.5L70.5 323.5L63.5 330.5L56.5 323.5Z" fill="url(#gL)" stroke="#000" stroke-width="1.2" /><circle cx="63.5" cy="316.5" r="1.8" fill="#fff" stroke="#0066cc" stroke-width="1.3"/><circle cx="70.5" cy="323.5" r="1.8" fill="#fff" stroke="#0066cc" stroke-width="1.3"/><circle cx="63.5" cy="330.5" r="1.8" fill="#fff" stroke="#0066cc" stroke-width="1.3"/><circle cx="56.5" cy="323.5" r="1.8" fill="#fff" stroke="#0066cc" stroke-width="1.3"/><circle cx="64.5" cy="345" r="6.5" fill="url(#gL)" stroke="#000" stroke-width="1.2"/><path d="M56 341.5L61 338" stroke="#000" stroke-width="1.1" fill="none" /><circle cx="59.5" cy="339.5" r="1.8" fill="#fff" stroke="#0066cc" stroke-width="1.3"/><path d="M63.5 366L63.5 377" stroke="#000" stroke-width="1.3" fill="none" /><path d="M56 377.5L71 377.5" stroke="#000" stroke-width="1.3" fill="none" /><circle cx="63.5" cy="377.5" r="1.8" fill="#fff" stroke="#0066cc" stroke-width="1.3"/><path d="M56 402L70 388" stroke="#000" stroke-width="1.4" fill="none" /><path d="M59.5 403L73 389.5" stroke="#000" stroke-width="1.4" fill="none" /><path d="M59.5 411.5h8v6h-8z" fill="#ffff99" stroke="#003366" stroke-width="1.1" /><circle cx="67" cy="419" r="3.5" fill="#cccc99" stroke="#003366" stroke-width="1.1"/><circle cx="58.5" cy="417.5" r="2" fill="#fff" stroke="#0066cc" stroke-width="1.3"/><circle cx="64" cy="440" r="2" fill="#fff" stroke="#0066cc" stroke-width="1.3"/><path d="M56 473.5L69.5 460.5" stroke="#000" stroke-width="1.3" fill="none" /><circle cx="64" cy="465" r="2.1" fill="#99ccff" stroke="#0066cc" stroke-width="1.3"/><circle cx="68.5" cy="468.5" r="1.9" fill="#fff" stroke="#000" stroke-width="1"/><path d="M58 495L58 487Q58 482 63 482L66 482" fill="none" stroke="#666" stroke-width="2.2" /><path d="M57.5 494.5L70.5 482" stroke="#ff3300" stroke-width="1.6" fill="none" /><path d="M58.5 495.5L71.5 483" stroke="#ffcc00" stroke-width="0.8" fill="none" /><rect x="68.5" y="493.5" width="3" height="3" fill="#fff" stroke="#666"/><path d="M58 524V515.5A4.3 4.3 0 0 1 66.5 515.5V522" fill="none" stroke="#993333" stroke-width="3" /><rect x="56.5" y="522" width="3" height="2" fill="#fff"/><rect x="65" y="521" width="3" height="2" fill="#fff"/><rect x="67.5" y="520.5" width="4" height="4" fill="#fff" stroke="#003399"/><rect x="69" y="522" width="1.5" height="1.5" fill="#0099cc"/><path d="M579.5 128L579.5 142" stroke="#000" stroke-width="1.3" fill="none" /><path d="M594.5 128L594.5 142" stroke="#000" stroke-width="1.3" fill="none" /><path d="M580 132.5L594 132.5" stroke="#000" stroke-width="1.2" fill="none" /><path d="M580.00 132.50L583.50 130.57L583.50 134.43Z" fill="#000"/><path d="M594.00 132.50L590.50 134.43L590.50 130.57Z" fill="#000"/><path d="M579.5 155L585 149.5" stroke="#000" stroke-width="1.7" fill="none" /><path d="M589 164.5L595 158.5" stroke="#000" stroke-width="1.7" fill="none" /><path d="M583.5 153L591 160.5" stroke="#000" stroke-width="1.2" fill="none" /><path d="M582.00 151.50L586.38 152.77L583.27 155.88Z" fill="#000"/><path d="M592.50 162.00L588.12 160.73L591.23 157.62Z" fill="#000"/><path d="M584.5 176L584.5 186" stroke="#000" stroke-width="1.3" fill="none" /><path d="M583 185.5L596 185.5" stroke="#000" stroke-width="1.3" fill="none" /><path d="M584.5 177.5L587 177.5" stroke="#000" stroke-width="1.2" fill="none" /><path d="M587 177.5L590.5 181" stroke="#000" stroke-width="1.2" fill="none" /><path d="M590 180.5L596 180.5" stroke="#000" stroke-width="1.2" fill="none" /><path d="M593.5 176L593.5 180.5" stroke="#000" stroke-width="1.2" fill="none" /><path d="M589.5 181L589.5 186" stroke="#000" stroke-width="1.2" fill="none" /><path d="M584.5 171.5h1v2h-1zM579.5 183.5h1v2h-1z" fill="none" stroke="#003399" stroke-width="1" /><path d="M592.5 171l2 3M594.5 171l-2 3M579 176l1 1.5l1 -1.5M580 177.5v2" fill="none" stroke="#003399" stroke-width="1" /><circle cx="587.5" cy="207" r="7" fill="none" stroke="#666" stroke-width="1"/><path d="M582 202L589 209" stroke="#000" stroke-width="1.4" fill="none" /><path d="M581.50 201.50L586.43 202.93L582.93 206.43Z" fill="#000"/><circle cx="587.5" cy="229" r="7" fill="none" stroke="#666" stroke-width="1"/><path d="M583 224.5L592 233.5" stroke="#000" stroke-width="1.4" fill="none" /><path d="M581.50 223.00L586.43 224.43L582.93 227.93Z" fill="#000"/><path d="M593.50 235.00L588.57 233.57L592.07 230.07Z" fill="#000"/><path d="M579 253.5L588.5 244" stroke="#000" stroke-width="1.2" fill="none" /><path d="M579 258.5L596 258.5" stroke="#000" stroke-width="1.3" fill="none" /><path d="M587 246.5A10 10 0 0 1 593.5 256" fill="none" stroke="#000" stroke-width="1.1" /><path d="M586.50 246.00L590.49 246.08L588.57 249.42Z" fill="#000"/><path d="M593.80 257.00L591.30 253.89L595.09 253.22Z" fill="#000"/><path d="M579.5 271L579.5 286" stroke="#000" stroke-width="1.3" fill="none" /><path d="M594.5 271L594.5 286" stroke="#000" stroke-width="1.3" fill="none" /><path d="M580 275.5L594 275.5" stroke="#000" stroke-width="1.2" fill="none" /><path d="M580.00 275.50L583.50 273.57L583.50 277.43Z" fill="#000"/><path d="M594.00 275.50L590.50 277.43L590.50 273.57Z" fill="#000"/><path d="M584 272L591 277.5L589 278.5L594 285L586 280L588 279L582.5 274Z" fill="#ffff00" stroke="#669933" stroke-width="0.9" /><path d="M579.5 293L579.5 308" stroke="#000" stroke-width="1.3" fill="none" /><path d="M580 296.5L594 296.5" stroke="#000" stroke-width="1.2" fill="none" /><path d="M580.00 296.50L583.50 294.57L583.50 298.43Z" fill="#000"/><path d="M594.00 296.50L590.50 298.43L590.50 294.57Z" fill="#000"/><path d="M589.5 300L589.5 308" stroke="#000" stroke-width="1.3" fill="none" /><path d="M580 303.5L589 303.5" stroke="#000" stroke-width="1.2" fill="none" /><path d="M580.00 303.50L583.50 301.57L583.50 305.43Z" fill="#000"/><path d="M589.00 303.50L585.50 305.43L585.50 301.57Z" fill="#000"/><path d="M579.5 316L579.5 330" stroke="#000" stroke-width="1.3" fill="none" /><path d="M587.5 316L587.5 330" stroke="#000" stroke-width="1.3" fill="none" /><path d="M594.5 316L594.5 330" stroke="#000" stroke-width="1.3" fill="none" /><path d="M580 319.5L587 319.5" stroke="#000" stroke-width="1.2" fill="none" /><path d="M580.00 319.50L583.50 317.57L583.50 321.43Z" fill="#000"/><path d="M587.00 319.50L583.50 321.43L583.50 317.57Z" fill="#000"/><path d="M588 319.5L594 319.5" stroke="#000" stroke-width="1.2" fill="none" /><path d="M588.00 319.50L591.50 317.57L591.50 321.43Z" fill="#000"/><path d="M594.00 319.50L590.50 321.43L590.50 317.57Z" fill="#000"/><path d="M581 350L588 346" stroke="#000" stroke-width="1.3" fill="none" /><path d="M578.50 351.50L581.88 347.64L583.58 352.29Z" fill="#000"/><path d="M585.5 345L591 350L589 351L593 356.5L586 352L588 351L583.5 347Z" fill="#ffff00" stroke="#669933" stroke-width="0.9" /><path d="M590 349.5L592.5 344L595 349.5M591 348H594" fill="none" stroke="#003399" stroke-width="1.1" /><path d="M579.5 367.5h15v11h-15z" fill="#ccffff" stroke="#003366" stroke-width="1.2" /><path d="M587.5 368L587.5 378" stroke="#003366" stroke-width="1" fill="none" /><circle cx="583.5" cy="373" r="2.5" fill="none" stroke="#336699"/><path d="M583.5 369.5L583.5 376.5" stroke="#336699" stroke-width="1" fill="none" /><path d="M580.5 373L586.5 373" stroke="#336699" stroke-width="1" fill="none" /><rect x="589" y="376" width="1.5" height="1.5" fill="#003399"/><path d="M592 369.5L592 377.5" stroke="#003399" stroke-width="1.3" fill="none" /><circle cx="587.5" cy="395" r="7" fill="none" stroke="#666" stroke-width="1"/><path d="M584 395.5H591M587.5 392V399" fill="none" stroke="#000" stroke-width="1.7" /><path d="M584.5 424L588 416.5L591.5 424M585.8 421.5H590.2" fill="none" stroke="#003399" stroke-width="1.8" /><path d="M579.5 424L579.5 431" stroke="#000" stroke-width="1.3" fill="none" /><path d="M594.5 424L594.5 431" stroke="#000" stroke-width="1.3" fill="none" /><path d="M580 427.5L594 427.5" stroke="#000" stroke-width="1.2" fill="none" /><path d="M580.00 427.50L583.50 425.57L583.50 429.43Z" fill="#000"/><path d="M594.00 427.50L590.50 429.43L590.50 425.57Z" fill="#000"/><path d="M584 447L592 439" stroke="#ffcc00" stroke-width="2.6" fill="none" /><path d="M592 439L594 437" stroke="#ff9999" stroke-width="2.6" fill="none" /><path d="M583 448L584.5 446.5" stroke="#000" stroke-width="1.5" fill="none" /><path d="M579.5 446L579.5 453" stroke="#000" stroke-width="1.3" fill="none" /><path d="M594.5 446L594.5 453" stroke="#000" stroke-width="1.3" fill="none" /><path d="M580 449.5L594 449.5" stroke="#000" stroke-width="1.2" fill="none" /><path d="M580.00 449.50L583.50 447.57L583.50 451.43Z" fill="#000"/><path d="M594.00 449.50L590.50 451.43L590.50 447.57Z" fill="#000"/><path d="M582.5 459L582.5 467" stroke="#003399" stroke-width="1.2" fill="none" /><path d="M594.5 459L594.5 467" stroke="#003399" stroke-width="1.2" fill="none" /><path d="M583 463.5L594 463.5" stroke="#003399" stroke-width="1.2" fill="none" /><path d="M583.00 463.50L586.50 461.57L586.50 465.43Z" fill="#003399"/><path d="M594.00 463.50L590.50 465.43L590.50 461.57Z" fill="#003399"/><path d="M579.5 465L579.5 474" stroke="#000" stroke-width="1.3" fill="none" /><path d="M590.5 465L590.5 474" stroke="#000" stroke-width="1.3" fill="none" /><path d="M580 468.5L590 468.5" stroke="#000" stroke-width="1.2" fill="none" /><path d="M580.00 468.50L583.50 466.57L583.50 470.43Z" fill="#000"/><path d="M590.00 468.50L586.50 470.43L586.50 466.57Z" fill="#000"/><path d="M586 495L594 488" stroke="#cc6633" stroke-width="2.2" fill="none" /><path d="M583 498L586.5 494.5" stroke="#000" stroke-width="2.2" fill="none" /><path d="M579.5 495L579.5 503" stroke="#000" stroke-width="1.3" fill="none" /><path d="M594.5 495L594.5 503" stroke="#000" stroke-width="1.3" fill="none" /><path d="M580 499.5L594 499.5" stroke="#000" stroke-width="1.2" fill="none" /><path d="M580.00 499.50L583.50 497.57L583.50 501.43Z" fill="#000"/><path d="M594.00 499.50L590.50 501.43L590.50 497.57Z" fill="#000"/><rect x="55" y="170" width="19" height="1" fill="#999"/><rect x="55" y="171" width="19" height="1" fill="#fff"/><rect x="55" y="286" width="19" height="1" fill="#999"/><rect x="55" y="287" width="19" height="1" fill="#fff"/><rect x="55" y="358" width="19" height="1" fill="#999"/><rect x="55" y="359" width="19" height="1" fill="#fff"/><rect x="55" y="452" width="19" height="1" fill="#999"/><rect x="55" y="453" width="19" height="1" fill="#fff"/><rect x="55" y="502" width="19" height="1" fill="#999"/><rect x="55" y="503" width="19" height="1" fill="#fff"/><rect x="578" y="192" width="19" height="1" fill="#999"/><rect x="578" y="193" width="19" height="1" fill="#fff"/><rect x="578" y="264" width="19" height="1" fill="#999"/><rect x="578" y="265" width="19" height="1" fill="#fff"/><rect x="578" y="336" width="19" height="1" fill="#999"/><rect x="578" y="337" width="19" height="1" fill="#fff"/><rect x="578" y="408" width="19" height="1" fill="#999"/><rect x="578" y="409" width="19" height="1" fill="#fff"/><rect x="578" y="480" width="19" height="1" fill="#999"/><rect x="578" y="481" width="19" height="1" fill="#fff"/><path d="M16.5 66.5H29L32.5 70V79.5H16.5Z" fill="url(#gT)" stroke="#336699" stroke-width="1.2" /><path d="M29 66.5V70H32.5" fill="#fff" stroke="#336699" stroke-width="1" /><path d="M39.5 69.5L48 66L54 63.5L55 66L53.5 73L47 77.5L42.5 79.5L41 75Z" fill="#ffcc33" stroke="#ff9933" stroke-width="0.9" /><path d="M42 72.5L52.5 65.5" stroke="#ffffff" stroke-width="1.6" fill="none" /><path d="M42.5 74.5L43 78" stroke="#ccffff" stroke-width="1" fill="none" /><path d="M47 71Q45.5 76.5 50.5 77.5" fill="none" stroke="#003366" stroke-width="1.9" /><path d="M54.00 78.00L49.01 79.23L50.29 74.44Z" fill="#003366"/><path d="M63.5 65.5h14v14h-14z" fill="#9999cc" stroke="#333399" stroke-width="1.1" /><rect x="66" y="66" width="9" height="6" fill="#fff"/><rect x="67" y="68" width="7" height="1" fill="#6699cc"/><rect x="67" y="70" width="7" height="1" fill="#6699cc"/><rect x="66" y="74" width="9" height="5" fill="#ccccff"/><rect x="71" y="75" width="2" height="3" fill="#333399"/><path d="M95.5 67.5L99.5 65.5L103 70L99 72.5Z" fill="#ffffff" stroke="#666699" stroke-width="1" /><path d="M93.5 74.5L100 70.5L106 73.5L99.5 77.5Z" fill="#ccccff" stroke="#333366" stroke-width="1" /><path d="M93.5 74.5L99.5 77.5V80L93.5 77Z" fill="#ccccff" stroke="#336666" stroke-width="1" /><path d="M99.5 77.5L106 73.5V76.5L99.5 80Z" fill="#ffffff" stroke="#336666" stroke-width="1" /><path d="M114.5 64.5H126L129.5 68V79.5H114.5Z" fill="url(#gL)" stroke="#336699" stroke-width="1.1" /><circle cx="123" cy="72" r="3.5" fill="#ccffff" stroke="#666699" stroke-width="1.2"/><path d="M120.5 74.5L116 79.5" stroke="#993300" stroke-width="1.6" fill="none" /><path d="M145.5 67L149.5 64.5L153.5 70L150 73Z" fill="#66ccff" stroke="#333399" stroke-width="1" /><path d="M147 67L150 71" stroke="#ccffff" stroke-width="1.2" fill="none" /><circle cx="141.5" cy="69.5" r="4.2" fill="#ffcc00" stroke="#cc6600" stroke-width="0.9"/><rect x="141" y="67" width="1" height="1" fill="#fff"/><rect x="143" y="68" width="1" height="1" fill="#fff"/><rect x="140" y="70" width="3" height="1" fill="#fff"/><path d="M137.5 75.5L144 72L151 75L144.5 78.5Z" fill="#ccccff" stroke="#333366" stroke-width="1" /><path d="M137.5 75.5L144.5 78.5V80.5L137.5 77.5Z" fill="#ccccff" stroke="#666666" stroke-width="1" /><path d="M144.5 78.5L151 75V77L144.5 80.5Z" fill="#ffffff" stroke="#666666" stroke-width="1" /><path d="M167 69L177 73" stroke="#9999cc" stroke-width="1.1" fill="none" /><path d="M167 76L177 72" stroke="#666699" stroke-width="1.1" fill="none" /><circle cx="179" cy="69.5" r="2.3" fill="none" stroke="#333366" stroke-width="1.3"/><circle cx="179" cy="76" r="2.3" fill="none" stroke="#333366" stroke-width="1.3"/><path d="M189.5 65.5h10l2 2v9h-12z" fill="url(#gL)" stroke="#336699" stroke-width="1.2" /><path d="M193.5 69.5h9l2.5 2.5v7.5h-11.5z" fill="url(#gT)" stroke="#336699" stroke-width="1.2" /><path d="M213 70L218 64.5L228 71L221 80Z" fill="#ffcc66" stroke="#cc9933" stroke-width="1.2" /><path d="M216.5 70.5h7l1.5 1.5v5.5h-8.5z" fill="url(#gL)" stroke="#336699" stroke-width="1" /><rect x="217" y="65" width="4" height="2" fill="#fff"/><path d="M243 73L249.5 66.5" stroke="#cc6633" stroke-width="2.2" fill="none" /><path d="M246 70L248 68" stroke="#333" stroke-width="0.8" fill="none" /><path d="M237 79L240 75L243 73L244.5 74.5L242 77Z" fill="#000" stroke="none" stroke-width="1" /><path d="M279 69Q275 62 268 69L266 72" fill="none" stroke="#003366" stroke-width="2.6" /><path d="M264 70L271 74L265 80Z" fill="#003366" stroke="none" stroke-width="1" /><path d="M288 70h5v1h-1v1h-1v1h-1v-1h-1v-1h-1z" fill="#000066"/><rect x="300" y="64" width="1" height="1" fill="#ffff99"/><rect x="306" y="64" width="1" height="1" fill="#ffcccc"/><rect x="306" y="66" width="1" height="1" fill="#66cccc"/><rect x="300" y="67" width="1" height="1" fill="#fff"/><rect x="301" y="67" width="1" height="1" fill="#fff"/><rect x="302" y="67" width="1" height="1" fill="#fff"/><rect x="303" y="67" width="1" height="1" fill="#fff"/><rect x="304" y="67" width="1" height="1" fill="#fff"/><rect x="300" y="68" width="1" height="1" fill="#fff"/><rect x="300" y="69" width="1" height="1" fill="#ffff99"/><rect x="301" y="68" width="1" height="1" fill="#ffff99"/><rect x="305" y="68" width="1" height="1" fill="#ffff99"/><rect x="306" y="69" width="1" height="1" fill="#ffff99"/><rect x="306" y="70" width="1" height="1" fill="#ffff99"/><rect x="309" y="67" width="1" height="1" fill="#ffff99"/><rect x="310" y="68" width="1" height="1" fill="#ffff99"/><rect x="311" y="69" width="1" height="1" fill="#ffff99"/><rect x="311" y="70" width="1" height="1" fill="#fff"/><rect x="312" y="71" width="1" height="1" fill="#ffff99"/><rect x="312" y="72" width="1" height="1" fill="#ffff99"/><rect x="313" y="73" width="1" height="1" fill="#ffcccc"/><rect x="307" y="73" width="1" height="1" fill="#ffff99"/><rect x="304" y="75" width="1" height="1" fill="#ffcccc"/><rect x="305" y="76" width="1" height="1" fill="#ffff99"/><rect x="306" y="77" width="1" height="1" fill="#ffff99"/><rect x="307" y="78" width="1" height="1" fill="#ffff99"/><rect x="308" y="79" width="1" height="1" fill="#ffff99"/><rect x="312" y="75" width="1" height="1" fill="#66cccc"/><rect x="315" y="74" width="1" height="1" fill="#ffff99"/><rect x="314" y="75" width="1" height="1" fill="#fff"/><rect x="313" y="76" width="1" height="1" fill="#fff"/><rect x="312" y="77" width="1" height="1" fill="#fff"/><rect x="311" y="78" width="1" height="1" fill="#ccccff"/><rect x="311" y="79" width="1" height="1" fill="#fff"/><rect x="314" y="76" width="1" height="1" fill="#ffff99"/><rect x="313" y="77" width="1" height="1" fill="#ffff99"/><rect x="328" y="71" width="1" height="1" fill="#ccccff"/><rect x="327" y="72" width="1" height="1" fill="#fff"/><rect x="328" y="72" width="1" height="1" fill="#fff"/><rect x="327" y="73" width="1" height="1" fill="#fff"/><path d="M342.5 68.5L345 66.5L348 68L350 67L353 69.5L354 74L352.5 78L349 78L346 75.5L343 72Z" fill="#cc9999" stroke="#cc9999" stroke-width="0.6" /><path d="M344 69L349 73M346 67.5L351 71.5M349 67.5L352.5 70.5" fill="none" stroke="#996666" stroke-width="0.9" /><path d="M350.5 78L354.5 74L358 77.5V80H352Z" fill="#336699" stroke="none" stroke-width="1" /><path d="M351.5 78.5L354 76" fill="none" stroke="#336666" stroke-width="1.2" /><path d="M354.5 63V70.5M351 66.5H358" fill="none" stroke="#336666" stroke-width="1.2" /><path d="M354.50 62.50L355.93 65.10L353.07 65.10Z" fill="#003366"/><path d="M354.50 71.00L353.07 68.40L355.93 68.40Z" fill="#003366"/><path d="M350.50 66.50L353.10 65.07L353.10 67.93Z" fill="#003366"/><path d="M358.50 66.50L355.90 67.93L355.90 65.07Z" fill="#003366"/><circle cx="370.5" cy="69.5" r="4.6" fill="#ccffff" stroke="#666666" stroke-width="1.6"/><rect x="367.5" y="66.5" width="2" height="1" fill="#fff"/><path d="M374.0 73.0L378.5 78.0" stroke="#cc6633" stroke-width="2" fill="none" /><path d="M376 65.5h6M379 62.5v6M376 70.5h6" fill="none" stroke="#003366" stroke-width="1.4" /><circle cx="393.5" cy="69.5" r="4.6" fill="#ccffff" stroke="#666666" stroke-width="1.6"/><rect x="390.5" y="66.5" width="2" height="1" fill="#fff"/><path d="M397.0 73.0L401.5 78.0" stroke="#cc6633" stroke-width="2" fill="none" /><rect x="391" y="67" width="5" height="5" fill="none" stroke="#336699" stroke-width="1.2"/><path d="M399 80L404 75V80Z" fill="#000" stroke="none" stroke-width="1" /><circle cx="416.5" cy="69.5" r="4.6" fill="#ccffff" stroke="#666666" stroke-width="1.6"/><rect x="413.5" y="66.5" width="2" height="1" fill="#fff"/><path d="M420.0 73.0L424.5 78.0" stroke="#cc6633" stroke-width="2" fill="none" /><path d="M415.5 72.5L421.5 66" fill="none" stroke="#003366" stroke-width="1.8" /><path d="M413.5 68L413.5 74L419 74Z" fill="#003366" stroke="none" stroke-width="1" /><path d="M420.5 66.5Q424 63.5 426.5 67" fill="none" stroke="#003366" stroke-width="1.6" /><rect x="440" y="64" width="3" height="4" fill="#ff0033"/><rect x="443" y="64" width="3" height="4" fill="#ff9900"/><rect x="446" y="64" width="2" height="4" fill="#ccff00"/><rect x="448" y="64" width="2" height="4" fill="#00cc66"/><rect x="450" y="64" width="2" height="4" fill="#00ccff"/><rect x="452" y="64" width="3" height="4" fill="#3366ff"/><path d="M441 73.5L447.5 71.5L455 67.5L456 70L451 74L444 76Z" fill="#ffcccc" stroke="#cc6666" stroke-width="0.8" /><path d="M440.5 72.5h6M440.5 75.5h6M441 78.5h5" fill="none" stroke="#6699cc" stroke-width="1.3" /><rect x="441" y="73" width="5" height="2" fill="#ffcc33"/><path d="M449.5 80L452.5 73L455.5 80M450.5 78H454.5" fill="none" stroke="#333" stroke-width="1.1" /><path d="M463.5 64.5h15v15h-15z" fill="#ccccff" stroke="#003366" stroke-width="1.2" /><rect x="465" y="66" width="3" height="12" fill="#ffffff"/><rect x="465" y="67" width="2" height="1" fill="#cc9900"/><rect x="465" y="69" width="2" height="1" fill="#cc9900"/><rect x="465" y="71" width="2" height="1" fill="#cc9900"/><rect x="465" y="73" width="2" height="1" fill="#cc9900"/><rect x="465" y="75" width="2" height="1" fill="#cc9900"/><rect x="465" y="77" width="2" height="1" fill="#cc9900"/><rect x="468" y="65" width="1" height="14" fill="#003366"/><rect x="470" y="67" width="3" height="3" fill="#336666"/><rect x="471" y="68" width="1" height="1" fill="#ffff66"/><rect x="474" y="67" width="3" height="3" fill="#336666"/><rect x="475" y="68" width="1" height="1" fill="#ffff66"/><rect x="470" y="71" width="3" height="3" fill="#336666"/><rect x="471" y="72" width="1" height="1" fill="#ffff66"/><rect x="474" y="71" width="3" height="3" fill="#336666"/><rect x="475" y="72" width="1" height="1" fill="#ffff66"/><rect x="473.5" y="74.5" width="4" height="4" fill="#ffff33" stroke="#336666"/><path d="M486.5 64.5h7l2 2v13h-9z" fill="#ccccff" stroke="#003366" stroke-width="1.1" /><rect x="488" y="67" width="3" height="3" fill="#336699"/><rect x="488" y="71" width="3" height="3" fill="#336699"/><rect x="488" y="75" width="3" height="3" fill="#336699"/><path d="M494 68Q499 68 499 74" fill="none" stroke="#003366" stroke-width="1.2" /><path d="M499.00 76.00L497.07 72.50L500.93 72.50Z" fill="#003366"/><rect x="497.5" y="76.5" width="4" height="4" fill="#ffff33" stroke="#003366"/><rect x="516" y="64" width="16" height="16" rx="3" fill="#336699"/><rect x="516" y="72" width="16" height="8" rx="2" fill="#003366" opacity="0.6"/><path d="M521 69A3 3 0 0 1 527 69Q527 71.5 524 73V75" fill="none" stroke="#fff" stroke-width="2" /><rect x="523" y="76" width="2" height="2" fill="#fff"/><path d="M557.5 76.5L561.5 64.5H564L566.5 72" fill="none" stroke="#000" stroke-width="2" /><path d="M559 72L565 72" stroke="#ccc" stroke-width="1" fill="none" /><path d="M565.5 74.5L571 69.5" stroke="#ff9933" stroke-width="3" fill="none" /><path d="M566 72L570 69" stroke="#993333" stroke-width="0.8" fill="none" stroke-dasharray="1 1"/><path d="M559 80L562 76L565 74L566.5 75.5L563.5 78.5Z" fill="#000" stroke="none" stroke-width="1" /><path d="M563 76L565.5 73" stroke="#fff" stroke-width="0.6" fill="none" /><path d="M17 105L23 102L31 106L25 109Z" fill="#99cccc" stroke="#9999cc" stroke-width="1"/><path d="M17 105L23 102" stroke="#ffffff" stroke-width="1"/><path d="M17 101L23 98L31 102L25 105Z" fill="#99cccc" stroke="#9999cc" stroke-width="1"/><path d="M17 101L23 98" stroke="#ffffff" stroke-width="1"/><path d="M17 97L23 94L31 98L25 101Z" fill="#99cccc" stroke="#9999cc" stroke-width="1"/><path d="M17 97L23 94" stroke="#ffffff" stroke-width="1"/><path d="M47.5 92.5A4.5 4.5 0 0 1 52 97Q52 99.5 50 101.5V103H45V101.5Q43 99.5 43 97A4.5 4.5 0 0 1 47.5 92.5Z" fill="#ffffff" stroke="#cccc33" stroke-width="1.2" /><path d="M44.5 94.5Q46 93.5 47 93.5" fill="none" stroke="#ff9966" stroke-width="0.8" /><rect x="45" y="103" width="5" height="2" fill="#9999cc"/><rect x="46" y="105" width="3" height="1.5" fill="#333366"/><rect x="56" y="92" width="2" height="2" fill="#ffff00"/><rect x="69" y="92" width="2" height="2" fill="#ffff00"/><rect x="56" y="105" width="2" height="2" fill="#ffff00"/><rect x="69" y="105" width="2" height="2" fill="#ffff00"/><circle cx="63.5" cy="99.5" r="6.3" fill="#ffcc33" stroke="#0066cc" stroke-width="1.3"/><path d="M58.5 95.5A6 6 0 0 1 67.5 94.5L59 103.5A6 6 0 0 1 58.5 95.5Z" fill="#ffff66"/><rect x="78.5" y="97.5" width="9" height="9" fill="#fff" stroke="#999" stroke-width="1"/><circle cx="78.5" cy="97.5" r="5.5" fill="#99ccff" stroke="#6699cc" stroke-width="1"/><circle cx="78.5" cy="97.5" r="3.5" fill="none" stroke="#6699cc" stroke-width="1" stroke-dasharray="1 1"/><rect x="77" y="96" width="3" height="3" fill="#cccc99"/><path d="M93 100.5V96A3.3 3.3 0 0 1 99.6 96V98" fill="none" stroke="#999900" stroke-width="2.4" /><path d="M93 100.5V96A3.3 3.3 0 0 1 99.6 96V98" fill="none" stroke="#ffff66" stroke-width="0.9" /><rect x="95.5" y="98.5" width="8" height="8" fill="#ffff66" stroke="#999933" stroke-width="1"/><path d="M96 101L103 99M96 103.5L103 101.5M96 106L103 104" fill="none" stroke="#cccc33" stroke-width="1" /><path d="M340 103L346 100L354 104L348 107Z" fill="#ffcc00" stroke="#cc9900" stroke-width="1"/><path d="M340 103L346 100" stroke="#ffffff" stroke-width="1"/><path d="M340 99L346 96L354 100L348 103Z" fill="#99cccc" stroke="#9999cc" stroke-width="1"/><path d="M340 99L346 96" stroke="#ffffff" stroke-width="1"/><path d="M340 95L346 92L354 96L348 99Z" fill="#99cccc" stroke="#9999cc" stroke-width="1"/><path d="M340 95L346 92" stroke="#ffffff" stroke-width="1"/><path d="M340 107.5L343.5 104" stroke="#003399" stroke-width="1.5" fill="none" /><path d="M345.00 102.50L343.89 106.34L341.16 103.61Z" fill="#003399"/><path d="M363 104L369 101L377 105L371 108Z" fill="#99cccc" stroke="#9999cc" stroke-width="1"/><path d="M363 104L369 101" stroke="#ffffff" stroke-width="1"/><path d="M363 100L369 97L377 101L371 104Z" fill="#99cccc" stroke="#9999cc" stroke-width="1"/><path d="M363 100L369 97" stroke="#ffffff" stroke-width="1"/><path d="M363 96L369 93L377 97L371 100Z" fill="#99cccc" stroke="#9999cc" stroke-width="1"/><path d="M363 96L369 93" stroke="#ffffff" stroke-width="1"/><path d="M368.5 101.5V98A3.8 3.8 0 0 1 376 98V102" fill="none" stroke="#003366" stroke-width="2" /><path d="M365.5 100L371.5 100L368.5 104.5Z" fill="#003366" stroke="none" stroke-width="1" /><rect x="2" y="2" width="16" height="16" fill="#fff"/><rect x="3" y="3" width="14" height="14" fill="#006666"/><rect x="4" y="4" width="12" height="12" fill="#0099cc"/><path d="M6.8 7.2Q10 4.8 13.2 6.8V15.8M13.2 10.2Q7 10 6.6 13Q7 16.2 13.2 14.2" fill="none" stroke="#dddddd" stroke-width="2.1" /><path d="M4.5 35V22.5H17.5V24" fill="none" stroke="#333" stroke-width="1"/><rect x="5" y="23" width="2" height="12" fill="#fff"/><path d="M6 24H20V31.5L16.5 35.5H6Z" fill="#006666"/><path d="M8 25H19V31L16 34.5H8Z" fill="#0099cc"/><rect x="6" y="24" width="2" height="11" fill="#3366cc"/><path d="M16 34.5L19 31H16.5V34.5Z" fill="#fff"/><path d="M15.5 35.5L20 31" stroke="#333" stroke-width="1"/><path d="M9 28.5H19M13.5 25V34" fill="none" stroke="#fff" stroke-width="1.4" /><circle cx="13.5" cy="28.5" r="1.6" fill="#fff"/><rect x="13" y="28" width="1" height="1" fill="#000"/><rect x="10" y="26" width="1" height="1" fill="#99ccff"/><rect x="16" y="26" width="1" height="1" fill="#99ccff"/><rect x="10" y="30" width="1" height="1" fill="#99ccff"/><rect x="10" y="33" width="1" height="1" fill="#99ccff"/></svg>
<svg style="left:27px;top:22px" width="40" height="13" viewBox="0 0 40 13" aria-label="文件(F)"><path fill="#000" d="M4 0h1v1h-1zM5 1h1v1h-1zM14 1h1v1h-1zM18 1h1v1h-1zM0 2h10v1h-10zM14 2h1v1h-1zM16 2h1v1h-1zM18 2h1v1h-1zM27 2h1v1h-1zM37 2h1v1h-1zM2 3h1v1h-1zM7 3h1v1h-1zM13 3h1v1h-1zM16 3h1v1h-1zM18 3h1v1h-1zM26 3h1v1h-1zM30 3h5v1h-5zM38 3h1v1h-1zM2 4h1v1h-1zM7 4h1v1h-1zM13 4h1v1h-1zM16 4h6v1h-6zM25 4h2v1h-2zM30 4h1v1h-1zM38 4h2v1h-2zM3 5h1v1h-1zM6 5h2v1h-2zM12 5h2v1h-2zM15 5h1v1h-1zM18 5h1v1h-1zM25 5h1v1h-1zM30 5h1v1h-1zM39 5h1v1h-1zM3 6h1v1h-1zM6 6h1v1h-1zM13 6h1v1h-1zM18 6h1v1h-1zM25 6h1v1h-1zM30 6h5v1h-5zM39 6h1v1h-1zM4 7h2v1h-2zM13 7h1v1h-1zM15 7h7v1h-7zM25 7h1v1h-1zM30 7h1v1h-1zM39 7h1v1h-1zM4 8h2v1h-2zM13 8h1v1h-1zM18 8h1v1h-1zM25 8h1v1h-1zM30 8h1v1h-1zM39 8h1v1h-1zM3 9h1v1h-1zM6 9h1v1h-1zM13 9h1v1h-1zM18 9h1v1h-1zM25 9h1v1h-1zM30 9h1v1h-1zM39 9h1v1h-1zM1 10h2v1h-2zM7 10h2v1h-2zM13 10h1v1h-1zM18 10h1v1h-1zM25 10h2v1h-2zM30 10h1v1h-1zM38 10h2v1h-2zM0 11h1v1h-1zM9 11h1v1h-1zM13 11h1v1h-1zM18 11h1v1h-1zM26 11h1v1h-1zM38 11h1v1h-1zM13 12h1v1h-1zM18 12h1v1h-1zM27 12h1v1h-1zM37 12h1v1h-1z"/></svg>
<div style="left:56px;top:34px;width:6px;height:1px;background:#000000;"></div>
<svg style="left:81px;top:22px" width="40" height="13" viewBox="0 0 40 13" aria-label="编辑(E)"><path fill="#000" d="M1 0h1v1h-1zM6 0h1v1h-1zM1 1h1v1h-1zM4 1h6v1h-6zM13 1h1v1h-1zM17 1h5v1h-5zM1 2h1v1h-1zM4 2h1v1h-1zM9 2h1v1h-1zM13 2h1v1h-1zM17 2h1v1h-1zM21 2h1v1h-1zM27 2h1v1h-1zM37 2h1v1h-1zM0 3h1v1h-1zM2 3h1v1h-1zM4 3h1v1h-1zM9 3h1v1h-1zM12 3h4v1h-4zM17 3h5v1h-5zM26 3h1v1h-1zM30 3h5v1h-5zM38 3h1v1h-1zM0 4h1v1h-1zM2 4h1v1h-1zM4 4h6v1h-6zM13 4h2v1h-2zM25 4h2v1h-2zM30 4h1v1h-1zM38 4h2v1h-2zM1 5h1v1h-1zM4 5h6v1h-6zM12 5h1v1h-1zM14 5h1v1h-1zM16 5h6v1h-6zM25 5h1v1h-1zM30 5h1v1h-1zM39 5h1v1h-1zM0 6h1v1h-1zM4 6h1v1h-1zM6 6h1v1h-1zM8 6h2v1h-2zM12 6h4v1h-4zM17 6h1v1h-1zM21 6h1v1h-1zM25 6h1v1h-1zM30 6h5v1h-5zM39 6h1v1h-1zM0 7h3v1h-3zM4 7h1v1h-1zM6 7h1v1h-1zM8 7h2v1h-2zM14 7h1v1h-1zM17 7h5v1h-5zM25 7h1v1h-1zM30 7h1v1h-1zM39 7h1v1h-1zM3 8h1v1h-1zM5 8h5v1h-5zM14 8h1v1h-1zM17 8h1v1h-1zM21 8h1v1h-1zM25 8h1v1h-1zM30 8h1v1h-1zM39 8h1v1h-1zM1 9h4v1h-4zM6 9h1v1h-1zM8 9h2v1h-2zM11 9h5v1h-5zM17 9h5v1h-5zM25 9h1v1h-1zM30 9h1v1h-1zM39 9h1v1h-1zM0 10h1v1h-1zM3 10h2v1h-2zM6 10h1v1h-1zM8 10h2v1h-2zM14 10h1v1h-1zM17 10h1v1h-1zM21 10h2v1h-2zM25 10h2v1h-2zM30 10h5v1h-5zM38 10h2v1h-2zM3 11h1v1h-1zM9 11h1v1h-1zM14 11h1v1h-1zM16 11h6v1h-6zM26 11h1v1h-1zM38 11h1v1h-1zM14 12h1v1h-1zM21 12h1v1h-1zM27 12h1v1h-1zM37 12h1v1h-1z"/></svg>
<div style="left:110px;top:34px;width:6px;height:1px;background:#000000;"></div>
<svg style="left:135px;top:22px" width="40" height="13" viewBox="0 0 40 13" aria-label="视图(V)"><path fill="#000" d="M1 0h1v1h-1zM4 0h6v1h-6zM1 1h1v1h-1zM4 1h1v1h-1zM9 1h1v1h-1zM0 2h5v1h-5zM7 2h1v1h-1zM9 2h1v1h-1zM12 2h10v1h-10zM27 2h1v1h-1zM37 2h1v1h-1zM2 3h1v1h-1zM4 3h1v1h-1zM7 3h1v1h-1zM9 3h1v1h-1zM12 3h1v1h-1zM16 3h1v1h-1zM21 3h1v1h-1zM26 3h1v1h-1zM29 3h1v1h-1zM35 3h1v1h-1zM38 3h1v1h-1zM2 4h1v1h-1zM4 4h1v1h-1zM7 4h1v1h-1zM9 4h1v1h-1zM12 4h1v1h-1zM15 4h5v1h-5zM21 4h1v1h-1zM25 4h2v1h-2zM30 4h1v1h-1zM34 4h1v1h-1zM38 4h2v1h-2zM1 5h1v1h-1zM4 5h1v1h-1zM6 5h1v1h-1zM9 5h1v1h-1zM12 5h4v1h-4zM18 5h1v1h-1zM21 5h1v1h-1zM25 5h1v1h-1zM30 5h1v1h-1zM34 5h1v1h-1zM39 5h1v1h-1zM0 6h3v1h-3zM4 6h1v1h-1zM6 6h1v1h-1zM9 6h1v1h-1zM12 6h1v1h-1zM16 6h2v1h-2zM21 6h1v1h-1zM25 6h1v1h-1zM30 6h1v1h-1zM34 6h1v1h-1zM39 6h1v1h-1zM0 7h2v1h-2zM3 7h1v1h-1zM6 7h2v1h-2zM12 7h4v1h-4zM18 7h4v1h-4zM25 7h1v1h-1zM31 7h1v1h-1zM33 7h1v1h-1zM39 7h1v1h-1zM1 8h1v1h-1zM6 8h2v1h-2zM12 8h1v1h-1zM16 8h3v1h-3zM21 8h1v1h-1zM25 8h1v1h-1zM31 8h1v1h-1zM33 8h1v1h-1zM39 8h1v1h-1zM1 9h1v1h-1zM5 9h1v1h-1zM7 9h1v1h-1zM10 9h1v1h-1zM12 9h1v1h-1zM14 9h3v1h-3zM21 9h1v1h-1zM25 9h1v1h-1zM31 9h1v1h-1zM33 9h1v1h-1zM39 9h1v1h-1zM1 10h1v1h-1zM4 10h2v1h-2zM7 10h1v1h-1zM9 10h1v1h-1zM12 10h1v1h-1zM17 10h2v1h-2zM21 10h1v1h-1zM25 10h2v1h-2zM32 10h1v1h-1zM38 10h2v1h-2zM1 11h1v1h-1zM7 11h3v1h-3zM12 11h10v1h-10zM26 11h1v1h-1zM38 11h1v1h-1zM12 12h1v1h-1zM21 12h1v1h-1zM27 12h1v1h-1zM37 12h1v1h-1z"/></svg>
<div style="left:164px;top:34px;width:6px;height:1px;background:#000000;"></div>
<svg style="left:189px;top:23px" width="40" height="12" viewBox="0 0 40 12" aria-label="插入(I)"><path fill="#000" d="M1 0h1v1h-1zM8 0h2v1h-2zM1 1h1v1h-1zM4 1h4v1h-4zM15 1h1v1h-1zM27 1h1v1h-1zM37 1h1v1h-1zM1 2h1v1h-1zM6 2h1v1h-1zM15 2h2v1h-2zM26 2h1v1h-1zM30 2h5v1h-5zM38 2h1v1h-1zM0 3h10v1h-10zM16 3h1v1h-1zM25 3h2v1h-2zM32 3h1v1h-1zM38 3h2v1h-2zM1 4h1v1h-1zM6 4h1v1h-1zM16 4h2v1h-2zM25 4h1v1h-1zM32 4h1v1h-1zM39 4h1v1h-1zM1 5h1v1h-1zM4 5h3v1h-3zM8 5h2v1h-2zM16 5h3v1h-3zM25 5h1v1h-1zM32 5h1v1h-1zM39 5h1v1h-1zM1 6h2v1h-2zM4 6h1v1h-1zM6 6h1v1h-1zM9 6h1v1h-1zM16 6h1v1h-1zM18 6h1v1h-1zM25 6h1v1h-1zM32 6h1v1h-1zM39 6h1v1h-1zM0 7h2v1h-2zM4 7h1v1h-1zM6 7h1v1h-1zM9 7h1v1h-1zM15 7h1v1h-1zM18 7h2v1h-2zM25 7h1v1h-1zM32 7h1v1h-1zM39 7h1v1h-1zM1 8h1v1h-1zM4 8h3v1h-3zM8 8h2v1h-2zM14 8h2v1h-2zM19 8h1v1h-1zM25 8h1v1h-1zM32 8h1v1h-1zM39 8h1v1h-1zM1 9h1v1h-1zM4 9h1v1h-1zM6 9h1v1h-1zM9 9h1v1h-1zM14 9h1v1h-1zM20 9h1v1h-1zM25 9h2v1h-2zM30 9h5v1h-5zM38 9h2v1h-2zM1 10h1v1h-1zM4 10h6v1h-6zM12 10h2v1h-2zM21 10h1v1h-1zM26 10h1v1h-1zM38 10h1v1h-1zM0 11h2v1h-2zM4 11h1v1h-1zM9 11h1v1h-1zM12 11h1v1h-1zM27 11h1v1h-1zM37 11h1v1h-1z"/></svg>
<div style="left:218px;top:34px;width:6px;height:1px;background:#000000;"></div>
<svg style="left:242px;top:22px" width="41" height="13" viewBox="0 0 41 13" aria-label="格式(O)"><path fill="#000" d="M2 0h1v1h-1zM7 0h1v1h-1zM2 1h1v1h-1zM6 1h5v1h-5zM19 1h1v1h-1zM21 1h1v1h-1zM2 2h1v1h-1zM6 2h1v1h-1zM9 2h1v1h-1zM19 2h1v1h-1zM22 2h1v1h-1zM28 2h1v1h-1zM38 2h1v1h-1zM1 3h6v1h-6zM9 3h1v1h-1zM13 3h10v1h-10zM27 3h1v1h-1zM32 3h3v1h-3zM39 3h1v1h-1zM2 4h1v1h-1zM7 4h2v1h-2zM19 4h1v1h-1zM26 4h2v1h-2zM31 4h1v1h-1zM35 4h1v1h-1zM39 4h2v1h-2zM2 5h2v1h-2zM7 5h2v1h-2zM19 5h1v1h-1zM26 5h1v1h-1zM31 5h1v1h-1zM35 5h1v1h-1zM40 5h1v1h-1zM1 6h2v1h-2zM4 6h3v1h-3zM9 6h2v1h-2zM13 6h5v1h-5zM19 6h1v1h-1zM26 6h1v1h-1zM31 6h1v1h-1zM35 6h1v1h-1zM40 6h1v1h-1zM1 7h2v1h-2zM4 7h1v1h-1zM6 7h5v1h-5zM15 7h1v1h-1zM19 7h1v1h-1zM26 7h1v1h-1zM31 7h1v1h-1zM35 7h1v1h-1zM40 7h1v1h-1zM0 8h1v1h-1zM2 8h1v1h-1zM5 8h1v1h-1zM10 8h1v1h-1zM15 8h1v1h-1zM19 8h1v1h-1zM26 8h1v1h-1zM31 8h1v1h-1zM35 8h1v1h-1zM40 8h1v1h-1zM2 9h1v1h-1zM5 9h1v1h-1zM10 9h1v1h-1zM15 9h1v1h-1zM20 9h1v1h-1zM26 9h1v1h-1zM31 9h1v1h-1zM35 9h1v1h-1zM40 9h1v1h-1zM2 10h1v1h-1zM6 10h5v1h-5zM15 10h1v1h-1zM17 10h2v1h-2zM20 10h1v1h-1zM23 10h1v1h-1zM26 10h2v1h-2zM32 10h3v1h-3zM39 10h2v1h-2zM2 11h1v1h-1zM10 11h1v1h-1zM13 11h4v1h-4zM20 11h1v1h-1zM22 11h1v1h-1zM27 11h1v1h-1zM39 11h1v1h-1zM21 12h2v1h-2zM28 12h1v1h-1zM38 12h1v1h-1z"/></svg>
<div style="left:272px;top:34px;width:6px;height:1px;background:#000000;"></div>
<svg style="left:297px;top:24px" width="40" height="11" viewBox="0 0 40 11" aria-label="工具(T)"><path fill="#000" d="M0 0h10v1h-10zM14 0h7v1h-7zM27 0h1v1h-1zM37 0h1v1h-1zM4 1h1v1h-1zM14 1h7v1h-7zM26 1h1v1h-1zM29 1h7v1h-7zM38 1h1v1h-1zM4 2h1v1h-1zM13 2h1v1h-1zM20 2h1v1h-1zM25 2h2v1h-2zM32 2h1v1h-1zM38 2h2v1h-2zM4 3h1v1h-1zM14 3h7v1h-7zM25 3h1v1h-1zM32 3h1v1h-1zM39 3h1v1h-1zM4 4h1v1h-1zM13 4h1v1h-1zM20 4h1v1h-1zM25 4h1v1h-1zM32 4h1v1h-1zM39 4h1v1h-1zM4 5h1v1h-1zM14 5h7v1h-7zM25 5h1v1h-1zM32 5h1v1h-1zM39 5h1v1h-1zM4 6h1v1h-1zM13 6h1v1h-1zM20 6h1v1h-1zM25 6h1v1h-1zM32 6h1v1h-1zM39 6h1v1h-1zM4 7h1v1h-1zM12 7h10v1h-10zM25 7h1v1h-1zM32 7h1v1h-1zM39 7h1v1h-1zM4 8h1v1h-1zM14 8h1v1h-1zM18 8h2v1h-2zM25 8h2v1h-2zM32 8h1v1h-1zM38 8h2v1h-2zM0 9h10v1h-10zM13 9h2v1h-2zM20 9h1v1h-1zM26 9h1v1h-1zM38 9h1v1h-1zM12 10h1v1h-1zM21 10h1v1h-1zM27 10h1v1h-1zM37 10h1v1h-1z"/></svg>
<div style="left:326px;top:34px;width:6px;height:1px;background:#000000;"></div>
<svg style="left:350px;top:22px" width="41" height="13" viewBox="0 0 41 13" aria-label="绘图(D)"><path fill="#000" d="M2 0h1v1h-1zM7 0h1v1h-1zM2 1h1v1h-1zM7 1h2v1h-2zM1 2h1v1h-1zM6 2h1v1h-1zM9 2h1v1h-1zM13 2h10v1h-10zM28 2h1v1h-1zM38 2h1v1h-1zM1 3h1v1h-1zM3 3h1v1h-1zM5 3h1v1h-1zM9 3h2v1h-2zM13 3h1v1h-1zM17 3h1v1h-1zM22 3h1v1h-1zM27 3h1v1h-1zM31 3h4v1h-4zM39 3h1v1h-1zM0 4h5v1h-5zM6 4h4v1h-4zM13 4h1v1h-1zM16 4h5v1h-5zM22 4h1v1h-1zM26 4h2v1h-2zM31 4h1v1h-1zM34 4h2v1h-2zM39 4h2v1h-2zM2 5h1v1h-1zM13 5h4v1h-4zM19 5h1v1h-1zM22 5h1v1h-1zM26 5h1v1h-1zM31 5h1v1h-1zM35 5h1v1h-1zM40 5h1v1h-1zM2 6h1v1h-1zM13 6h1v1h-1zM17 6h2v1h-2zM22 6h1v1h-1zM26 6h1v1h-1zM31 6h1v1h-1zM35 6h1v1h-1zM40 6h1v1h-1zM1 7h3v1h-3zM5 7h6v1h-6zM13 7h4v1h-4zM19 7h4v1h-4zM26 7h1v1h-1zM31 7h1v1h-1zM35 7h1v1h-1zM40 7h1v1h-1zM1 8h1v1h-1zM6 8h1v1h-1zM13 8h1v1h-1zM17 8h3v1h-3zM22 8h1v1h-1zM26 8h1v1h-1zM31 8h1v1h-1zM35 8h1v1h-1zM40 8h1v1h-1zM3 9h1v1h-1zM6 9h1v1h-1zM9 9h1v1h-1zM13 9h1v1h-1zM15 9h3v1h-3zM22 9h1v1h-1zM26 9h1v1h-1zM31 9h1v1h-1zM34 9h2v1h-2zM40 9h1v1h-1zM0 10h3v1h-3zM5 10h1v1h-1zM8 10h3v1h-3zM13 10h1v1h-1zM18 10h2v1h-2zM22 10h1v1h-1zM26 10h2v1h-2zM31 10h4v1h-4zM39 10h2v1h-2zM5 11h3v1h-3zM10 11h1v1h-1zM13 11h10v1h-10zM27 11h1v1h-1zM39 11h1v1h-1zM13 12h1v1h-1zM22 12h1v1h-1zM28 12h1v1h-1zM38 12h1v1h-1z"/></svg>
<div style="left:380px;top:34px;width:6px;height:1px;background:#000000;"></div>
<svg style="left:404px;top:22px" width="41" height="13" viewBox="0 0 41 13" aria-label="标注(N)"><path fill="#000" d="M13 0h1v1h-1zM19 0h1v1h-1zM2 1h1v1h-1zM14 1h2v1h-2zM19 1h1v1h-1zM2 2h1v1h-1zM6 2h5v1h-5zM16 2h7v1h-7zM28 2h1v1h-1zM38 2h1v1h-1zM2 3h1v1h-1zM19 3h1v1h-1zM27 3h1v1h-1zM31 3h1v1h-1zM35 3h1v1h-1zM39 3h1v1h-1zM1 4h4v1h-4zM13 4h2v1h-2zM19 4h1v1h-1zM26 4h2v1h-2zM31 4h2v1h-2zM35 4h1v1h-1zM39 4h2v1h-2zM2 5h1v1h-1zM19 5h1v1h-1zM26 5h1v1h-1zM31 5h2v1h-2zM35 5h1v1h-1zM40 5h1v1h-1zM2 6h2v1h-2zM5 6h6v1h-6zM16 6h7v1h-7zM26 6h1v1h-1zM31 6h1v1h-1zM33 6h1v1h-1zM35 6h1v1h-1zM40 6h1v1h-1zM1 7h2v1h-2zM4 7h1v1h-1zM8 7h1v1h-1zM15 7h1v1h-1zM19 7h1v1h-1zM26 7h1v1h-1zM31 7h1v1h-1zM33 7h1v1h-1zM35 7h1v1h-1zM40 7h1v1h-1zM1 8h2v1h-2zM6 8h1v1h-1zM8 8h2v1h-2zM14 8h1v1h-1zM19 8h1v1h-1zM26 8h1v1h-1zM31 8h1v1h-1zM34 8h2v1h-2zM40 8h1v1h-1zM0 9h1v1h-1zM2 9h1v1h-1zM5 9h1v1h-1zM8 9h1v1h-1zM10 9h1v1h-1zM14 9h1v1h-1zM19 9h1v1h-1zM26 9h1v1h-1zM31 9h1v1h-1zM34 9h2v1h-2zM40 9h1v1h-1zM2 10h1v1h-1zM5 10h1v1h-1zM8 10h1v1h-1zM10 10h1v1h-1zM13 10h1v1h-1zM19 10h1v1h-1zM26 10h2v1h-2zM31 10h1v1h-1zM35 10h1v1h-1zM39 10h2v1h-2zM2 11h1v1h-1zM8 11h1v1h-1zM13 11h1v1h-1zM16 11h8v1h-8zM27 11h1v1h-1zM39 11h1v1h-1zM2 12h1v1h-1zM6 12h2v1h-2zM28 12h1v1h-1zM38 12h1v1h-1z"/></svg>
<div style="left:434px;top:34px;width:6px;height:1px;background:#000000;"></div>
<svg style="left:458px;top:22px" width="41" height="13" viewBox="0 0 41 13" aria-label="修改(M)"><path fill="#000" d="M3 0h1v1h-1zM6 0h1v1h-1zM2 1h1v1h-1zM6 1h5v1h-5zM19 1h1v1h-1zM2 2h1v1h-1zM5 2h2v1h-2zM10 2h1v1h-1zM13 2h4v1h-4zM19 2h1v1h-1zM28 2h1v1h-1zM38 2h1v1h-1zM1 3h2v1h-2zM5 3h1v1h-1zM7 3h1v1h-1zM9 3h1v1h-1zM16 3h1v1h-1zM19 3h1v1h-1zM27 3h1v1h-1zM31 3h1v1h-1zM35 3h1v1h-1zM39 3h1v1h-1zM1 4h3v1h-3zM7 4h2v1h-2zM16 4h1v1h-1zM18 4h5v1h-5zM26 4h2v1h-2zM31 4h2v1h-2zM34 4h2v1h-2zM39 4h2v1h-2zM0 5h1v1h-1zM2 5h1v1h-1zM4 5h3v1h-3zM9 5h3v1h-3zM16 5h1v1h-1zM18 5h1v1h-1zM22 5h1v1h-1zM26 5h1v1h-1zM31 5h2v1h-2zM34 5h2v1h-2zM40 5h1v1h-1zM2 6h2v1h-2zM7 6h2v1h-2zM13 6h5v1h-5zM19 6h1v1h-1zM21 6h1v1h-1zM26 6h1v1h-1zM31 6h2v1h-2zM34 6h2v1h-2zM40 6h1v1h-1zM2 7h2v1h-2zM5 7h2v1h-2zM9 7h1v1h-1zM13 7h1v1h-1zM19 7h1v1h-1zM21 7h1v1h-1zM26 7h1v1h-1zM31 7h1v1h-1zM33 7h1v1h-1zM35 7h1v1h-1zM40 7h1v1h-1zM2 8h2v1h-2zM7 8h2v1h-2zM13 8h1v1h-1zM19 8h1v1h-1zM21 8h1v1h-1zM26 8h1v1h-1zM31 8h1v1h-1zM35 8h1v1h-1zM40 8h1v1h-1zM2 9h1v1h-1zM6 9h1v1h-1zM10 9h1v1h-1zM13 9h1v1h-1zM20 9h1v1h-1zM26 9h1v1h-1zM31 9h1v1h-1zM35 9h1v1h-1zM40 9h1v1h-1zM2 10h1v1h-1zM8 10h2v1h-2zM13 10h1v1h-1zM15 10h2v1h-2zM19 10h3v1h-3zM26 10h2v1h-2zM31 10h1v1h-1zM35 10h1v1h-1zM39 10h2v1h-2zM2 11h1v1h-1zM5 11h3v1h-3zM13 11h2v1h-2zM18 11h2v1h-2zM21 11h2v1h-2zM27 11h1v1h-1zM39 11h1v1h-1zM17 12h1v1h-1zM22 12h1v1h-1zM28 12h1v1h-1zM38 12h1v1h-1z"/></svg>
<div style="left:488px;top:34px;width:6px;height:1px;background:#000000;"></div>
<svg style="left:7px;top:41px" width="76" height="12" viewBox="0 0 76 12" aria-label="ET扩展工具(X)"><path fill="#000" d="M13 0h1v1h-1zM18 0h1v1h-1zM13 1h1v1h-1zM19 1h1v1h-1zM25 1h9v1h-9zM36 1h10v1h-10zM50 1h7v1h-7zM63 1h1v1h-1zM73 1h1v1h-1zM0 2h12v1h-12zM13 2h1v1h-1zM16 2h6v1h-6zM25 2h1v1h-1zM33 2h1v1h-1zM40 2h1v1h-1zM50 2h7v1h-7zM62 2h1v1h-1zM66 2h1v1h-1zM70 2h1v1h-1zM74 2h1v1h-1zM0 3h1v1h-1zM8 3h1v1h-1zM12 3h3v1h-3zM16 3h1v1h-1zM25 3h9v1h-9zM40 3h1v1h-1zM49 3h1v1h-1zM56 3h1v1h-1zM61 3h2v1h-2zM66 3h2v1h-2zM69 3h2v1h-2zM74 3h2v1h-2zM0 4h1v1h-1zM8 4h1v1h-1zM13 4h1v1h-1zM16 4h1v1h-1zM25 4h1v1h-1zM28 4h1v1h-1zM31 4h1v1h-1zM40 4h1v1h-1zM50 4h7v1h-7zM61 4h1v1h-1zM67 4h1v1h-1zM69 4h1v1h-1zM75 4h1v1h-1zM0 5h5v1h-5zM8 5h1v1h-1zM13 5h1v1h-1zM16 5h1v1h-1zM25 5h9v1h-9zM40 5h1v1h-1zM49 5h1v1h-1zM56 5h1v1h-1zM61 5h1v1h-1zM68 5h1v1h-1zM75 5h1v1h-1zM0 6h1v1h-1zM8 6h1v1h-1zM13 6h2v1h-2zM16 6h1v1h-1zM25 6h1v1h-1zM28 6h1v1h-1zM31 6h1v1h-1zM40 6h1v1h-1zM50 6h7v1h-7zM61 6h1v1h-1zM67 6h3v1h-3zM75 6h1v1h-1zM0 7h1v1h-1zM8 7h1v1h-1zM12 7h2v1h-2zM16 7h1v1h-1zM24 7h1v1h-1zM26 7h8v1h-8zM40 7h1v1h-1zM49 7h1v1h-1zM56 7h1v1h-1zM61 7h1v1h-1zM67 7h1v1h-1zM69 7h1v1h-1zM75 7h1v1h-1zM0 8h1v1h-1zM8 8h1v1h-1zM13 8h1v1h-1zM16 8h1v1h-1zM24 8h1v1h-1zM27 8h1v1h-1zM30 8h1v1h-1zM33 8h1v1h-1zM40 8h1v1h-1zM48 8h10v1h-10zM61 8h1v1h-1zM66 8h1v1h-1zM70 8h1v1h-1zM75 8h1v1h-1zM0 9h5v1h-5zM8 9h1v1h-1zM13 9h1v1h-1zM15 9h1v1h-1zM24 9h1v1h-1zM27 9h1v1h-1zM30 9h3v1h-3zM40 9h1v1h-1zM50 9h1v1h-1zM54 9h2v1h-2zM61 9h2v1h-2zM66 9h1v1h-1zM70 9h1v1h-1zM74 9h2v1h-2zM13 10h1v1h-1zM15 10h1v1h-1zM24 10h1v1h-1zM27 10h1v1h-1zM29 10h1v1h-1zM31 10h2v1h-2zM36 10h10v1h-10zM49 10h2v1h-2zM56 10h1v1h-1zM62 10h1v1h-1zM74 10h1v1h-1zM12 11h2v1h-2zM15 11h1v1h-1zM23 11h1v1h-1zM27 11h2v1h-2zM33 11h1v1h-1zM48 11h1v1h-1zM57 11h1v1h-1zM63 11h1v1h-1zM73 11h1v1h-1z"/></svg>
<div style="left:72px;top:52px;width:6px;height:1px;background:#000000;"></div>
<svg style="left:97px;top:41px" width="40" height="12" viewBox="0 0 40 12" aria-label="窗口(W)"><path fill="#000" d="M4 0h1v1h-1zM0 1h10v1h-10zM13 1h9v1h-9zM27 1h1v1h-1zM37 1h1v1h-1zM0 2h1v1h-1zM3 2h1v1h-1zM6 2h1v1h-1zM9 2h1v1h-1zM13 2h1v1h-1zM21 2h1v1h-1zM26 2h1v1h-1zM29 2h1v1h-1zM35 2h1v1h-1zM38 2h1v1h-1zM2 3h1v1h-1zM7 3h2v1h-2zM13 3h1v1h-1zM21 3h1v1h-1zM25 3h2v1h-2zM29 3h1v1h-1zM35 3h1v1h-1zM38 3h2v1h-2zM0 4h2v1h-2zM4 4h1v1h-1zM9 4h1v1h-1zM13 4h1v1h-1zM21 4h1v1h-1zM25 4h1v1h-1zM29 4h1v1h-1zM32 4h1v1h-1zM35 4h1v1h-1zM39 4h1v1h-1zM1 5h8v1h-8zM13 5h1v1h-1zM21 5h1v1h-1zM25 5h1v1h-1zM30 5h1v1h-1zM32 5h1v1h-1zM34 5h1v1h-1zM39 5h1v1h-1zM1 6h1v1h-1zM3 6h4v1h-4zM8 6h1v1h-1zM13 6h1v1h-1zM21 6h1v1h-1zM25 6h1v1h-1zM30 6h2v1h-2zM33 6h2v1h-2zM39 6h1v1h-1zM1 7h2v1h-2zM6 7h1v1h-1zM8 7h1v1h-1zM13 7h1v1h-1zM21 7h1v1h-1zM25 7h1v1h-1zM30 7h2v1h-2zM33 7h2v1h-2zM39 7h1v1h-1zM1 8h1v1h-1zM4 8h2v1h-2zM8 8h1v1h-1zM13 8h1v1h-1zM21 8h1v1h-1zM25 8h1v1h-1zM30 8h2v1h-2zM33 8h2v1h-2zM39 8h1v1h-1zM1 9h1v1h-1zM4 9h1v1h-1zM6 9h1v1h-1zM8 9h1v1h-1zM13 9h1v1h-1zM21 9h1v1h-1zM25 9h2v1h-2zM30 9h2v1h-2zM33 9h2v1h-2zM38 9h2v1h-2zM1 10h1v1h-1zM3 10h1v1h-1zM8 10h1v1h-1zM13 10h9v1h-9zM26 10h1v1h-1zM38 10h1v1h-1zM1 11h8v1h-8zM21 11h1v1h-1zM27 11h1v1h-1zM37 11h1v1h-1z"/></svg>
<div style="left:126px;top:52px;width:6px;height:1px;background:#000000;"></div>
<svg style="left:151px;top:41px" width="40" height="12" viewBox="0 0 40 12" aria-label="帮助(H)"><path fill="#000" d="M2 0h1v1h-1zM6 0h4v1h-4zM0 1h5v1h-5zM6 1h1v1h-1zM9 1h1v1h-1zM12 1h4v1h-4zM18 1h1v1h-1zM27 1h1v1h-1zM37 1h1v1h-1zM2 2h1v1h-1zM6 2h1v1h-1zM8 2h1v1h-1zM12 2h1v1h-1zM15 2h1v1h-1zM18 2h1v1h-1zM26 2h1v1h-1zM30 2h1v1h-1zM34 2h1v1h-1zM38 2h1v1h-1zM0 3h5v1h-5zM6 3h1v1h-1zM8 3h1v1h-1zM12 3h4v1h-4zM17 3h5v1h-5zM25 3h2v1h-2zM30 3h1v1h-1zM34 3h1v1h-1zM38 3h2v1h-2zM0 4h5v1h-5zM6 4h1v1h-1zM9 4h1v1h-1zM12 4h1v1h-1zM15 4h1v1h-1zM18 4h1v1h-1zM21 4h1v1h-1zM25 4h1v1h-1zM30 4h1v1h-1zM34 4h1v1h-1zM39 4h1v1h-1zM2 5h1v1h-1zM6 5h1v1h-1zM9 5h1v1h-1zM12 5h1v1h-1zM15 5h1v1h-1zM18 5h1v1h-1zM21 5h1v1h-1zM25 5h1v1h-1zM30 5h5v1h-5zM39 5h1v1h-1zM1 6h1v1h-1zM6 6h1v1h-1zM8 6h1v1h-1zM12 6h4v1h-4zM18 6h1v1h-1zM21 6h1v1h-1zM25 6h1v1h-1zM30 6h1v1h-1zM34 6h1v1h-1zM39 6h1v1h-1zM0 7h1v1h-1zM4 7h1v1h-1zM12 7h1v1h-1zM15 7h1v1h-1zM18 7h1v1h-1zM21 7h1v1h-1zM25 7h1v1h-1zM30 7h1v1h-1zM34 7h1v1h-1zM39 7h1v1h-1zM1 8h8v1h-8zM12 8h1v1h-1zM15 8h2v1h-2zM18 8h1v1h-1zM21 8h1v1h-1zM25 8h1v1h-1zM30 8h1v1h-1zM34 8h1v1h-1zM39 8h1v1h-1zM1 9h1v1h-1zM4 9h1v1h-1zM8 9h1v1h-1zM12 9h4v1h-4zM17 9h1v1h-1zM21 9h1v1h-1zM25 9h2v1h-2zM30 9h1v1h-1zM34 9h1v1h-1zM38 9h2v1h-2zM1 10h1v1h-1zM4 10h1v1h-1zM7 10h2v1h-2zM16 10h2v1h-2zM21 10h1v1h-1zM26 10h1v1h-1zM38 10h1v1h-1zM4 11h1v1h-1zM16 11h1v1h-1zM19 11h2v1h-2zM27 11h1v1h-1zM37 11h1v1h-1z"/></svg>
<div style="left:180px;top:52px;width:6px;height:1px;background:#000000;"></div>
<svg style="left:20px;top:5px" width="202" height="11" viewBox="0 0 202 11" aria-label="AutoCAD 2004 - [Drawing1.dwg]"><path fill="#fff" d="M107 0h4v1h-4zM143 0h2v1h-2zM198 0h4v1h-4zM1 1h4v1h-4zM16 1h2v1h-2zM30 1h5v1h-5zM36 1h4v1h-4zM42 1h6v1h-6zM58 1h4v1h-4zM65 1h4v1h-4zM72 1h4v1h-4zM81 1h2v1h-2zM107 1h2v1h-2zM112 1h6v1h-6zM143 1h2v1h-2zM164 1h2v1h-2zM179 1h3v1h-3zM200 1h2v1h-2zM3 2h3v1h-3zM16 2h2v1h-2zM29 2h2v1h-2zM33 2h2v1h-2zM38 2h3v1h-3zM43 2h2v1h-2zM47 2h2v1h-2zM57 2h2v1h-2zM61 2h2v1h-2zM65 2h2v1h-2zM68 2h2v1h-2zM72 2h2v1h-2zM75 2h2v1h-2zM80 2h3v1h-3zM107 2h2v1h-2zM113 2h2v1h-2zM117 2h2v1h-2zM163 2h3v1h-3zM180 2h2v1h-2zM200 2h2v1h-2zM2 3h4v1h-4zM7 3h3v1h-3zM11 3h3v1h-3zM15 3h6v1h-6zM23 3h4v1h-4zM29 3h2v1h-2zM33 3h2v1h-2zM37 3h4v1h-4zM43 3h2v1h-2zM48 3h2v1h-2zM57 3h2v1h-2zM61 3h2v1h-2zM64 3h2v1h-2zM68 3h2v1h-2zM71 3h2v1h-2zM75 3h2v1h-2zM80 3h3v1h-3zM107 3h2v1h-2zM113 3h2v1h-2zM118 3h8v1h-8zM127 3h8v1h-8zM137 3h3v1h-3zM141 3h4v1h-4zM147 3h6v1h-6zM156 3h10v1h-10zM177 3h7v1h-7zM186 3h3v1h-3zM191 3h6v1h-6zM200 3h2v1h-2zM2 4h4v1h-4zM8 4h2v1h-2zM12 4h2v1h-2zM16 4h2v1h-2zM22 4h2v1h-2zM26 4h2v1h-2zM29 4h2v1h-2zM37 4h4v1h-4zM43 4h2v1h-2zM48 4h2v1h-2zM60 4h2v1h-2zM64 4h2v1h-2zM68 4h2v1h-2zM71 4h2v1h-2zM75 4h2v1h-2zM79 4h4v1h-4zM107 4h2v1h-2zM113 4h2v1h-2zM118 4h2v1h-2zM121 4h3v1h-3zM131 4h3v1h-3zM135 4h2v1h-2zM138 4h2v1h-2zM143 4h2v1h-2zM148 4h3v1h-3zM152 4h2v1h-2zM155 4h2v1h-2zM159 4h2v1h-2zM164 4h2v1h-2zM176 4h2v1h-2zM180 4h3v1h-3zM184 4h2v1h-2zM187 4h2v1h-2zM190 4h2v1h-2zM194 4h2v1h-2zM200 4h2v1h-2zM2 5h2v1h-2zM5 5h2v1h-2zM8 5h2v1h-2zM12 5h2v1h-2zM16 5h2v1h-2zM22 5h2v1h-2zM26 5h2v1h-2zM29 5h2v1h-2zM37 5h2v1h-2zM40 5h2v1h-2zM43 5h2v1h-2zM48 5h2v1h-2zM60 5h2v1h-2zM64 5h2v1h-2zM68 5h2v1h-2zM71 5h2v1h-2zM75 5h2v1h-2zM78 5h2v1h-2zM81 5h2v1h-2zM92 5h6v1h-6zM107 5h2v1h-2zM113 5h2v1h-2zM118 5h2v1h-2zM121 5h2v1h-2zM127 5h12v1h-12zM143 5h2v1h-2zM148 5h2v1h-2zM152 5h2v1h-2zM155 5h2v1h-2zM159 5h2v1h-2zM164 5h2v1h-2zM176 5h2v1h-2zM180 5h8v1h-8zM190 5h2v1h-2zM194 5h2v1h-2zM200 5h2v1h-2zM1 6h6v1h-6zM8 6h2v1h-2zM12 6h2v1h-2zM16 6h2v1h-2zM22 6h2v1h-2zM26 6h2v1h-2zM29 6h2v1h-2zM36 6h6v1h-6zM43 6h2v1h-2zM48 6h2v1h-2zM59 6h2v1h-2zM64 6h2v1h-2zM68 6h2v1h-2zM71 6h2v1h-2zM75 6h2v1h-2zM78 6h6v1h-6zM107 6h2v1h-2zM113 6h2v1h-2zM118 6h2v1h-2zM121 6h2v1h-2zM127 6h2v1h-2zM131 6h8v1h-8zM143 6h2v1h-2zM148 6h2v1h-2zM152 6h2v1h-2zM155 6h2v1h-2zM159 6h2v1h-2zM164 6h2v1h-2zM176 6h2v1h-2zM180 6h8v1h-8zM190 6h2v1h-2zM194 6h2v1h-2zM200 6h2v1h-2zM1 7h2v1h-2zM5 7h2v1h-2zM8 7h2v1h-2zM11 7h3v1h-3zM16 7h2v1h-2zM19 7h2v1h-2zM22 7h2v1h-2zM26 7h2v1h-2zM29 7h2v1h-2zM33 7h2v1h-2zM36 7h2v1h-2zM40 7h2v1h-2zM43 7h2v1h-2zM47 7h2v1h-2zM58 7h2v1h-2zM61 7h2v1h-2zM65 7h2v1h-2zM68 7h2v1h-2zM72 7h2v1h-2zM75 7h2v1h-2zM81 7h2v1h-2zM107 7h2v1h-2zM113 7h2v1h-2zM117 7h2v1h-2zM121 7h2v1h-2zM127 7h2v1h-2zM130 7h9v1h-9zM143 7h2v1h-2zM148 7h2v1h-2zM152 7h2v1h-2zM155 7h2v1h-2zM159 7h2v1h-2zM164 7h2v1h-2zM171 7h2v1h-2zM176 7h2v1h-2zM180 7h8v1h-8zM190 7h2v1h-2zM194 7h2v1h-2zM200 7h2v1h-2zM0 8h8v1h-8zM9 8h6v1h-6zM17 8h4v1h-4zM23 8h4v1h-4zM30 8h18v1h-18zM57 8h6v1h-6zM65 8h4v1h-4zM72 8h4v1h-4zM80 8h4v1h-4zM107 8h2v1h-2zM112 8h6v1h-6zM120 8h5v1h-5zM127 8h12v1h-12zM141 8h6v1h-6zM148 8h7v1h-7zM156 8h5v1h-5zM162 8h6v1h-6zM171 8h2v1h-2zM177 8h11v1h-11zM191 8h5v1h-5zM200 8h2v1h-2zM107 9h2v1h-2zM159 9h2v1h-2zM194 9h2v1h-2zM200 9h2v1h-2zM107 10h4v1h-4zM155 10h5v1h-5zM190 10h5v1h-5zM198 10h4v1h-4z"/></svg>
<svg style="left:20px;top:600px" width="150" height="14" viewBox="0 0 150 14" aria-label="命令: '_.properties"><path fill="#000" d="M5 0h1v1h-1zM21 0h1v1h-1zM4 1h3v1h-3zM20 1h3v1h-3zM3 2h2v1h-2zM6 2h2v1h-2zM20 2h1v1h-1zM22 2h2v1h-2zM2 3h1v1h-1zM7 3h2v1h-2zM18 3h2v1h-2zM23 3h2v1h-2zM51 3h1v1h-1zM121 3h1v1h-1zM131 3h1v1h-1zM0 4h2v1h-2zM3 4h5v1h-5zM9 4h2v1h-2zM17 4h2v1h-2zM20 4h2v1h-2zM24 4h2v1h-2zM51 4h1v1h-1zM121 4h1v1h-1zM16 5h1v1h-1zM21 5h2v1h-2zM26 5h1v1h-1zM34 5h2v1h-2zM51 5h1v1h-1zM71 5h2v1h-2zM74 5h3v1h-3zM81 5h2v1h-2zM84 5h3v1h-3zM90 5h3v1h-3zM95 5h2v1h-2zM98 5h3v1h-3zM105 5h4v1h-4zM113 5h2v1h-2zM116 5h3v1h-3zM120 5h5v1h-5zM130 5h2v1h-2zM137 5h4v1h-4zM146 5h4v1h-4zM1 6h4v1h-4zM6 6h4v1h-4zM51 6h1v1h-1zM72 6h2v1h-2zM77 6h2v1h-2zM82 6h2v1h-2zM88 6h2v1h-2zM93 6h2v1h-2zM96 6h2v1h-2zM101 6h2v1h-2zM104 6h1v1h-1zM109 6h1v1h-1zM114 6h2v1h-2zM121 6h1v1h-1zM131 6h1v1h-1zM136 6h1v1h-1zM141 6h1v1h-1zM145 6h1v1h-1zM149 6h1v1h-1zM1 7h1v1h-1zM4 7h1v1h-1zM6 7h1v1h-1zM9 7h1v1h-1zM17 7h9v1h-9zM72 7h1v1h-1zM78 7h1v1h-1zM82 7h1v1h-1zM88 7h1v1h-1zM94 7h1v1h-1zM96 7h1v1h-1zM102 7h1v1h-1zM104 7h6v1h-6zM114 7h1v1h-1zM121 7h1v1h-1zM131 7h1v1h-1zM136 7h6v1h-6zM145 7h4v1h-4zM1 8h1v1h-1zM4 8h1v1h-1zM6 8h1v1h-1zM9 8h1v1h-1zM24 8h1v1h-1zM72 8h1v1h-1zM78 8h1v1h-1zM82 8h1v1h-1zM88 8h1v1h-1zM94 8h1v1h-1zM96 8h1v1h-1zM102 8h1v1h-1zM104 8h1v1h-1zM114 8h1v1h-1zM121 8h1v1h-1zM131 8h1v1h-1zM136 8h1v1h-1zM149 8h1v1h-1zM1 9h1v1h-1zM4 9h1v1h-1zM6 9h1v1h-1zM9 9h1v1h-1zM23 9h1v1h-1zM72 9h2v1h-2zM77 9h1v1h-1zM82 9h1v1h-1zM88 9h2v1h-2zM93 9h2v1h-2zM96 9h2v1h-2zM101 9h1v1h-1zM104 9h1v1h-1zM114 9h1v1h-1zM121 9h1v1h-1zM131 9h1v1h-1zM136 9h1v1h-1zM144 9h1v1h-1zM149 9h1v1h-1zM1 10h4v1h-4zM6 10h1v1h-1zM8 10h2v1h-2zM20 10h3v1h-3zM34 10h2v1h-2zM66 10h2v1h-2zM72 10h1v1h-1zM74 10h3v1h-3zM81 10h4v1h-4zM90 10h3v1h-3zM96 10h1v1h-1zM98 10h3v1h-3zM105 10h5v1h-5zM113 10h4v1h-4zM122 10h4v1h-4zM129 10h5v1h-5zM137 10h5v1h-5zM144 10h5v1h-5zM1 11h1v1h-1zM6 11h1v1h-1zM21 11h2v1h-2zM72 11h1v1h-1zM96 11h1v1h-1zM6 12h1v1h-1zM23 12h1v1h-1zM55 12h8v1h-8zM72 12h1v1h-1zM96 12h1v1h-1zM71 13h3v1h-3zM95 13h3v1h-3z"/></svg>
<svg style="left:20px;top:613px" width="179" height="13" viewBox="0 0 179 13" aria-label="命令: _.erase 找到 1 个"><path fill="#000" d="M5 0h1v1h-1zM21 0h1v1h-1zM118 0h1v1h-1zM138 0h1v1h-1zM173 0h1v1h-1zM4 1h3v1h-3zM20 1h3v1h-3zM113 1h1v1h-1zM118 1h1v1h-1zM120 1h2v1h-2zM128 1h6v1h-6zM138 1h1v1h-1zM172 1h3v1h-3zM3 2h2v1h-2zM6 2h2v1h-2zM20 2h1v1h-1zM22 2h2v1h-2zM113 2h1v1h-1zM118 2h1v1h-1zM121 2h1v1h-1zM130 2h1v1h-1zM135 2h1v1h-1zM138 2h1v1h-1zM155 2h1v1h-1zM172 2h1v1h-1zM174 2h2v1h-2zM2 3h1v1h-1zM7 3h2v1h-2zM18 3h2v1h-2zM23 3h2v1h-2zM112 3h4v1h-4zM118 3h1v1h-1zM121 3h2v1h-2zM129 3h1v1h-1zM132 3h1v1h-1zM135 3h1v1h-1zM138 3h1v1h-1zM154 3h2v1h-2zM170 3h2v1h-2zM175 3h2v1h-2zM0 4h2v1h-2zM3 4h5v1h-5zM9 4h2v1h-2zM17 4h2v1h-2zM20 4h2v1h-2zM24 4h2v1h-2zM113 4h1v1h-1zM116 4h5v1h-5zM128 4h6v1h-6zM135 4h1v1h-1zM138 4h1v1h-1zM155 4h1v1h-1zM169 4h2v1h-2zM173 4h1v1h-1zM176 4h2v1h-2zM16 5h1v1h-1zM21 5h2v1h-2zM26 5h1v1h-1zM34 5h2v1h-2zM65 5h4v1h-4zM73 5h2v1h-2zM76 5h3v1h-3zM81 5h4v1h-4zM90 5h4v1h-4zM97 5h4v1h-4zM113 5h1v1h-1zM118 5h1v1h-1zM135 5h1v1h-1zM138 5h1v1h-1zM155 5h1v1h-1zM168 5h1v1h-1zM173 5h1v1h-1zM178 5h1v1h-1zM1 6h4v1h-4zM6 6h4v1h-4zM64 6h1v1h-1zM69 6h1v1h-1zM74 6h2v1h-2zM85 6h1v1h-1zM89 6h1v1h-1zM93 6h1v1h-1zM96 6h1v1h-1zM101 6h1v1h-1zM113 6h3v1h-3zM121 6h1v1h-1zM131 6h1v1h-1zM135 6h1v1h-1zM138 6h1v1h-1zM155 6h1v1h-1zM173 6h1v1h-1zM1 7h1v1h-1zM4 7h1v1h-1zM6 7h1v1h-1zM9 7h1v1h-1zM17 7h9v1h-9zM64 7h6v1h-6zM74 7h1v1h-1zM81 7h5v1h-5zM89 7h4v1h-4zM96 7h6v1h-6zM112 7h3v1h-3zM119 7h1v1h-1zM121 7h1v1h-1zM128 7h6v1h-6zM135 7h1v1h-1zM138 7h1v1h-1zM155 7h1v1h-1zM173 7h1v1h-1zM1 8h1v1h-1zM4 8h1v1h-1zM6 8h1v1h-1zM9 8h1v1h-1zM24 8h1v1h-1zM64 8h1v1h-1zM74 8h1v1h-1zM80 8h1v1h-1zM85 8h1v1h-1zM93 8h1v1h-1zM96 8h1v1h-1zM113 8h1v1h-1zM119 8h2v1h-2zM131 8h1v1h-1zM135 8h1v1h-1zM138 8h1v1h-1zM155 8h1v1h-1zM173 8h1v1h-1zM1 9h1v1h-1zM4 9h1v1h-1zM6 9h1v1h-1zM9 9h1v1h-1zM23 9h1v1h-1zM64 9h1v1h-1zM74 9h1v1h-1zM80 9h1v1h-1zM84 9h2v1h-2zM88 9h1v1h-1zM93 9h1v1h-1zM96 9h1v1h-1zM113 9h1v1h-1zM119 9h1v1h-1zM131 9h1v1h-1zM138 9h1v1h-1zM154 9h3v1h-3zM173 9h1v1h-1zM1 10h4v1h-4zM6 10h1v1h-1zM8 10h2v1h-2zM20 10h3v1h-3zM34 10h2v1h-2zM58 10h2v1h-2zM65 10h5v1h-5zM73 10h4v1h-4zM81 10h3v1h-3zM85 10h2v1h-2zM88 10h5v1h-5zM97 10h5v1h-5zM113 10h1v1h-1zM118 10h3v1h-3zM123 10h1v1h-1zM131 10h3v1h-3zM138 10h1v1h-1zM173 10h1v1h-1zM1 11h1v1h-1zM6 11h1v1h-1zM21 11h2v1h-2zM113 11h1v1h-1zM116 11h2v1h-2zM120 11h1v1h-1zM122 11h1v1h-1zM128 11h5v1h-5zM138 11h1v1h-1zM173 11h1v1h-1zM6 12h1v1h-1zM23 12h1v1h-1zM47 12h8v1h-8zM112 12h2v1h-2zM121 12h2v1h-2zM136 12h2v1h-2z"/></svg>
<svg style="left:20px;top:636px" width="36" height="13" viewBox="0 0 36 13" aria-label="命令:"><path fill="#000" d="M5 0h1v1h-1zM21 0h1v1h-1zM4 1h3v1h-3zM20 1h3v1h-3zM3 2h2v1h-2zM6 2h2v1h-2zM20 2h1v1h-1zM22 2h2v1h-2zM2 3h1v1h-1zM7 3h2v1h-2zM18 3h2v1h-2zM23 3h2v1h-2zM0 4h2v1h-2zM3 4h5v1h-5zM9 4h2v1h-2zM17 4h2v1h-2zM20 4h2v1h-2zM24 4h2v1h-2zM16 5h1v1h-1zM21 5h2v1h-2zM26 5h1v1h-1zM34 5h2v1h-2zM1 6h4v1h-4zM6 6h4v1h-4zM1 7h1v1h-1zM4 7h1v1h-1zM6 7h1v1h-1zM9 7h1v1h-1zM17 7h9v1h-9zM1 8h1v1h-1zM4 8h1v1h-1zM6 8h1v1h-1zM9 8h1v1h-1zM24 8h1v1h-1zM1 9h1v1h-1zM4 9h1v1h-1zM6 9h1v1h-1zM9 9h1v1h-1zM23 9h1v1h-1zM1 10h4v1h-4zM6 10h1v1h-1zM8 10h2v1h-2zM20 10h3v1h-3zM34 10h2v1h-2zM1 11h1v1h-1zM6 11h1v1h-1zM21 11h2v1h-2zM6 12h1v1h-1zM23 12h1v1h-1z"/></svg>
<svg style="left:8px;top:662px" width="155" height="11" viewBox="0 0 155 11" aria-label="163.9048, 130.7482, 0.0000"><path fill="#000" d="M1 0h2v1h-2zM7 0h4v1h-4zM12 0h4v1h-4zM25 0h3v1h-3zM31 0h3v1h-3zM39 0h1v1h-1zM43 0h3v1h-3zM61 0h2v1h-2zM66 0h4v1h-4zM73 0h3v1h-3zM84 0h5v1h-5zM93 0h1v1h-1zM97 0h3v1h-3zM102 0h4v1h-4zM121 0h3v1h-3zM133 0h3v1h-3zM139 0h3v1h-3zM145 0h3v1h-3zM151 0h3v1h-3zM2 1h1v1h-1zM6 1h2v1h-2zM12 1h1v1h-1zM15 1h2v1h-2zM24 1h1v1h-1zM27 1h1v1h-1zM30 1h1v1h-1zM33 1h2v1h-2zM38 1h2v1h-2zM42 1h1v1h-1zM46 1h1v1h-1zM62 1h1v1h-1zM66 1h1v1h-1zM69 1h2v1h-2zM72 1h1v1h-1zM75 1h2v1h-2zM87 1h1v1h-1zM92 1h2v1h-2zM96 1h1v1h-1zM100 1h1v1h-1zM102 1h1v1h-1zM105 1h1v1h-1zM120 1h1v1h-1zM123 1h2v1h-2zM132 1h1v1h-1zM135 1h2v1h-2zM138 1h1v1h-1zM141 1h2v1h-2zM144 1h1v1h-1zM147 1h2v1h-2zM150 1h1v1h-1zM153 1h2v1h-2zM2 2h1v1h-1zM6 2h1v1h-1zM16 2h1v1h-1zM24 2h1v1h-1zM28 2h1v1h-1zM30 2h1v1h-1zM34 2h1v1h-1zM37 2h1v1h-1zM39 2h1v1h-1zM42 2h1v1h-1zM46 2h1v1h-1zM62 2h1v1h-1zM70 2h1v1h-1zM72 2h1v1h-1zM76 2h1v1h-1zM87 2h1v1h-1zM91 2h1v1h-1zM93 2h1v1h-1zM96 2h1v1h-1zM100 2h1v1h-1zM106 2h1v1h-1zM120 2h1v1h-1zM124 2h1v1h-1zM132 2h1v1h-1zM136 2h1v1h-1zM138 2h1v1h-1zM142 2h1v1h-1zM144 2h1v1h-1zM148 2h1v1h-1zM150 2h1v1h-1zM154 2h1v1h-1zM2 3h1v1h-1zM6 3h1v1h-1zM8 3h2v1h-2zM15 3h1v1h-1zM24 3h1v1h-1zM28 3h1v1h-1zM30 3h1v1h-1zM34 3h1v1h-1zM37 3h1v1h-1zM39 3h1v1h-1zM42 3h2v1h-2zM45 3h1v1h-1zM62 3h1v1h-1zM69 3h1v1h-1zM72 3h1v1h-1zM76 3h1v1h-1zM86 3h1v1h-1zM91 3h1v1h-1zM93 3h1v1h-1zM96 3h2v1h-2zM99 3h1v1h-1zM105 3h2v1h-2zM120 3h1v1h-1zM124 3h1v1h-1zM132 3h1v1h-1zM136 3h1v1h-1zM138 3h1v1h-1zM142 3h1v1h-1zM144 3h1v1h-1zM148 3h1v1h-1zM150 3h1v1h-1zM154 3h1v1h-1zM2 4h1v1h-1zM6 4h2v1h-2zM10 4h1v1h-1zM13 4h2v1h-2zM24 4h1v1h-1zM27 4h2v1h-2zM30 4h1v1h-1zM34 4h1v1h-1zM36 4h1v1h-1zM39 4h1v1h-1zM43 4h3v1h-3zM62 4h1v1h-1zM67 4h2v1h-2zM72 4h1v1h-1zM76 4h1v1h-1zM86 4h1v1h-1zM90 4h1v1h-1zM93 4h1v1h-1zM97 4h3v1h-3zM105 4h1v1h-1zM120 4h1v1h-1zM124 4h1v1h-1zM132 4h1v1h-1zM136 4h1v1h-1zM138 4h1v1h-1zM142 4h1v1h-1zM144 4h1v1h-1zM148 4h1v1h-1zM150 4h1v1h-1zM154 4h1v1h-1zM2 5h1v1h-1zM6 5h1v1h-1zM10 5h1v1h-1zM15 5h2v1h-2zM25 5h2v1h-2zM28 5h1v1h-1zM30 5h1v1h-1zM34 5h1v1h-1zM36 5h1v1h-1zM39 5h1v1h-1zM42 5h1v1h-1zM45 5h2v1h-2zM62 5h1v1h-1zM69 5h2v1h-2zM72 5h1v1h-1zM76 5h1v1h-1zM86 5h1v1h-1zM90 5h1v1h-1zM93 5h1v1h-1zM96 5h1v1h-1zM99 5h2v1h-2zM104 5h2v1h-2zM120 5h1v1h-1zM124 5h1v1h-1zM132 5h1v1h-1zM136 5h1v1h-1zM138 5h1v1h-1zM142 5h1v1h-1zM144 5h1v1h-1zM148 5h1v1h-1zM150 5h1v1h-1zM154 5h1v1h-1zM2 6h1v1h-1zM6 6h1v1h-1zM10 6h1v1h-1zM16 6h1v1h-1zM28 6h1v1h-1zM30 6h1v1h-1zM34 6h7v1h-7zM42 6h1v1h-1zM46 6h1v1h-1zM62 6h1v1h-1zM70 6h1v1h-1zM72 6h1v1h-1zM76 6h1v1h-1zM86 6h1v1h-1zM89 6h6v1h-6zM96 6h1v1h-1zM100 6h1v1h-1zM103 6h2v1h-2zM120 6h1v1h-1zM124 6h1v1h-1zM132 6h1v1h-1zM136 6h1v1h-1zM138 6h1v1h-1zM142 6h1v1h-1zM144 6h1v1h-1zM148 6h1v1h-1zM150 6h1v1h-1zM154 6h1v1h-1zM2 7h1v1h-1zM6 7h1v1h-1zM10 7h1v1h-1zM16 7h1v1h-1zM18 7h1v1h-1zM27 7h1v1h-1zM30 7h1v1h-1zM33 7h2v1h-2zM39 7h1v1h-1zM42 7h1v1h-1zM46 7h1v1h-1zM48 7h1v1h-1zM62 7h1v1h-1zM70 7h1v1h-1zM72 7h1v1h-1zM75 7h2v1h-2zM78 7h1v1h-1zM85 7h2v1h-2zM93 7h1v1h-1zM96 7h1v1h-1zM100 7h1v1h-1zM102 7h2v1h-2zM108 7h1v1h-1zM120 7h1v1h-1zM123 7h2v1h-2zM126 7h1v1h-1zM132 7h1v1h-1zM135 7h2v1h-2zM138 7h1v1h-1zM141 7h2v1h-2zM144 7h1v1h-1zM147 7h2v1h-2zM150 7h1v1h-1zM153 7h2v1h-2zM0 8h5v1h-5zM7 8h3v1h-3zM12 8h4v1h-4zM18 8h1v1h-1zM24 8h3v1h-3zM31 8h3v1h-3zM39 8h1v1h-1zM43 8h3v1h-3zM48 8h2v1h-2zM60 8h5v1h-5zM66 8h4v1h-4zM73 8h3v1h-3zM78 8h1v1h-1zM85 8h2v1h-2zM93 8h1v1h-1zM97 8h3v1h-3zM102 8h5v1h-5zM108 8h2v1h-2zM121 8h3v1h-3zM126 8h1v1h-1zM133 8h3v1h-3zM139 8h3v1h-3zM145 8h3v1h-3zM151 8h3v1h-3zM49 9h1v1h-1zM109 9h1v1h-1zM48 10h1v1h-1zM108 10h1v1h-1z"/></svg>
<svg style="left:261px;top:660px" width="24" height="12" viewBox="0 0 24 12" aria-label="捕捉"><path fill="#000" d="M2 0h1v1h-1zM7 0h3v1h-3zM14 0h1v1h-1zM17 0h6v1h-6zM2 1h1v1h-1zM7 1h1v1h-1zM10 1h1v1h-1zM14 1h1v1h-1zM17 1h1v1h-1zM22 1h1v1h-1zM0 2h3v1h-3zM4 2h7v1h-7zM12 2h4v1h-4zM17 2h1v1h-1zM22 2h1v1h-1zM2 3h1v1h-1zM7 3h1v1h-1zM14 3h1v1h-1zM17 3h1v1h-1zM22 3h1v1h-1zM2 4h1v1h-1zM5 4h6v1h-6zM14 4h1v1h-1zM17 4h6v1h-6zM2 5h1v1h-1zM5 5h1v1h-1zM7 5h1v1h-1zM10 5h1v1h-1zM14 5h1v1h-1zM19 5h1v1h-1zM1 6h10v1h-10zM13 6h3v1h-3zM17 6h1v1h-1zM19 6h1v1h-1zM0 7h3v1h-3zM5 7h1v1h-1zM7 7h1v1h-1zM10 7h1v1h-1zM12 7h3v1h-3zM17 7h1v1h-1zM19 7h4v1h-4zM2 8h1v1h-1zM5 8h6v1h-6zM14 8h1v1h-1zM17 8h1v1h-1zM19 8h1v1h-1zM2 9h1v1h-1zM5 9h1v1h-1zM7 9h1v1h-1zM10 9h1v1h-1zM14 9h1v1h-1zM16 9h4v1h-4zM2 10h1v1h-1zM5 10h1v1h-1zM7 10h1v1h-1zM10 10h1v1h-1zM14 10h1v1h-1zM16 10h1v1h-1zM18 10h3v1h-3zM1 11h2v1h-2zM5 11h1v1h-1zM7 11h1v1h-1zM9 11h2v1h-2zM13 11h2v1h-2zM16 11h1v1h-1zM19 11h5v1h-5z"/></svg>
<svg style="left:293px;top:660px" width="23" height="12" viewBox="0 0 23 12" aria-label="栅格"><path fill="#000" d="M2 0h1v1h-1zM5 0h2v1h-2zM8 0h3v1h-3zM14 0h1v1h-1zM19 0h1v1h-1zM2 1h1v1h-1zM5 1h2v1h-2zM8 1h1v1h-1zM10 1h1v1h-1zM14 1h1v1h-1zM18 1h5v1h-5zM2 2h1v1h-1zM5 2h2v1h-2zM8 2h1v1h-1zM10 2h1v1h-1zM14 2h1v1h-1zM17 2h2v1h-2zM21 2h1v1h-1zM1 3h3v1h-3zM5 3h2v1h-2zM8 3h1v1h-1zM10 3h1v1h-1zM12 3h7v1h-7zM21 3h1v1h-1zM2 4h1v1h-1zM5 4h2v1h-2zM8 4h1v1h-1zM10 4h1v1h-1zM14 4h2v1h-2zM19 4h2v1h-2zM1 5h11v1h-11zM14 5h2v1h-2zM19 5h3v1h-3zM1 6h6v1h-6zM8 6h1v1h-1zM10 6h1v1h-1zM13 6h6v1h-6zM21 6h2v1h-2zM1 7h2v1h-2zM4 7h1v1h-1zM6 7h1v1h-1zM8 7h1v1h-1zM10 7h1v1h-1zM13 7h2v1h-2zM16 7h7v1h-7zM0 8h3v1h-3zM4 8h1v1h-1zM6 8h3v1h-3zM10 8h1v1h-1zM12 8h1v1h-1zM14 8h1v1h-1zM17 8h2v1h-2zM22 8h1v1h-1zM2 9h1v1h-1zM4 9h1v1h-1zM6 9h3v1h-3zM10 9h1v1h-1zM14 9h1v1h-1zM17 9h2v1h-2zM22 9h1v1h-1zM2 10h1v1h-1zM4 10h1v1h-1zM6 10h3v1h-3zM10 10h1v1h-1zM14 10h1v1h-1zM17 10h6v1h-6zM2 11h1v1h-1zM4 11h1v1h-1zM6 11h2v1h-2zM9 11h2v1h-2zM14 11h1v1h-1zM17 11h1v1h-1zM22 11h1v1h-1z"/></svg>
<svg style="left:325px;top:660px" width="23" height="12" viewBox="0 0 23 12" aria-label="正交"><path fill="#000" d="M17 0h1v1h-1zM1 1h10v1h-10zM17 1h2v1h-2zM6 2h1v1h-1zM13 2h10v1h-10zM6 3h1v1h-1zM15 3h1v1h-1zM20 3h1v1h-1zM2 4h1v1h-1zM6 4h1v1h-1zM14 4h2v1h-2zM20 4h2v1h-2zM2 5h1v1h-1zM6 5h5v1h-5zM13 5h2v1h-2zM21 5h2v1h-2zM2 6h1v1h-1zM6 6h1v1h-1zM13 6h1v1h-1zM16 6h1v1h-1zM19 6h2v1h-2zM22 6h1v1h-1zM2 7h1v1h-1zM6 7h1v1h-1zM16 7h1v1h-1zM19 7h1v1h-1zM2 8h1v1h-1zM6 8h1v1h-1zM17 8h2v1h-2zM2 9h1v1h-1zM6 9h1v1h-1zM16 9h4v1h-4zM0 10h12v1h-12zM14 10h3v1h-3zM19 10h3v1h-3zM13 11h2v1h-2zM21 11h2v1h-2z"/></svg>
<svg style="left:357px;top:660px" width="23" height="12" viewBox="0 0 23 12" aria-label="极轴"><path fill="#000" d="M2 0h1v1h-1zM14 0h1v1h-1zM20 0h1v1h-1zM2 1h1v1h-1zM5 1h5v1h-5zM12 1h5v1h-5zM20 1h1v1h-1zM1 2h3v1h-3zM6 2h1v1h-1zM9 2h1v1h-1zM14 2h1v1h-1zM20 2h1v1h-1zM1 3h3v1h-3zM6 3h1v1h-1zM8 3h1v1h-1zM13 3h1v1h-1zM17 3h6v1h-6zM2 4h2v1h-2zM6 4h1v1h-1zM8 4h3v1h-3zM13 4h1v1h-1zM15 4h1v1h-1zM17 4h2v1h-2zM20 4h1v1h-1zM22 4h1v1h-1zM1 5h4v1h-4zM6 5h1v1h-1zM10 5h1v1h-1zM13 5h6v1h-6zM20 5h1v1h-1zM22 5h1v1h-1zM1 6h2v1h-2zM5 6h3v1h-3zM9 6h2v1h-2zM15 6h1v1h-1zM17 6h6v1h-6zM1 7h2v1h-2zM5 7h1v1h-1zM7 7h1v1h-1zM9 7h1v1h-1zM15 7h1v1h-1zM17 7h2v1h-2zM20 7h1v1h-1zM22 7h1v1h-1zM0 8h1v1h-1zM2 8h1v1h-1zM5 8h1v1h-1zM7 8h3v1h-3zM13 8h6v1h-6zM20 8h1v1h-1zM22 8h1v1h-1zM2 9h1v1h-1zM4 9h2v1h-2zM8 9h2v1h-2zM13 9h1v1h-1zM15 9h1v1h-1zM17 9h2v1h-2zM20 9h1v1h-1zM22 9h1v1h-1zM2 10h1v1h-1zM4 10h1v1h-1zM7 10h4v1h-4zM15 10h1v1h-1zM17 10h6v1h-6zM2 11h3v1h-3zM6 11h1v1h-1zM10 11h1v1h-1zM15 11h1v1h-1zM17 11h1v1h-1zM22 11h1v1h-1z"/></svg>
<svg style="left:390px;top:660px" width="47" height="12" viewBox="0 0 47 12" aria-label="对象捕捉"><path fill="#000" d="M8 0h1v1h-1zM15 0h1v1h-1zM25 0h1v1h-1zM30 0h3v1h-3zM37 0h1v1h-1zM40 0h6v1h-6zM8 1h1v1h-1zM14 1h5v1h-5zM25 1h1v1h-1zM30 1h1v1h-1zM33 1h1v1h-1zM37 1h1v1h-1zM40 1h1v1h-1zM45 1h1v1h-1zM0 2h5v1h-5zM8 2h1v1h-1zM13 2h1v1h-1zM17 2h1v1h-1zM23 2h3v1h-3zM27 2h7v1h-7zM35 2h4v1h-4zM40 2h1v1h-1zM45 2h1v1h-1zM3 3h2v1h-2zM8 3h1v1h-1zM12 3h9v1h-9zM25 3h1v1h-1zM30 3h1v1h-1zM37 3h1v1h-1zM40 3h1v1h-1zM45 3h1v1h-1zM3 4h8v1h-8zM13 4h1v1h-1zM16 4h1v1h-1zM20 4h1v1h-1zM25 4h1v1h-1zM28 4h6v1h-6zM37 4h1v1h-1zM40 4h6v1h-6zM0 5h1v1h-1zM3 5h1v1h-1zM8 5h1v1h-1zM13 5h8v1h-8zM25 5h1v1h-1zM28 5h1v1h-1zM30 5h1v1h-1zM33 5h1v1h-1zM37 5h1v1h-1zM42 5h1v1h-1zM1 6h3v1h-3zM5 6h1v1h-1zM8 6h1v1h-1zM13 6h4v1h-4zM19 6h2v1h-2zM24 6h10v1h-10zM36 6h3v1h-3zM40 6h1v1h-1zM42 6h1v1h-1zM2 7h2v1h-2zM5 7h2v1h-2zM8 7h1v1h-1zM12 7h1v1h-1zM15 7h5v1h-5zM23 7h3v1h-3zM28 7h1v1h-1zM30 7h1v1h-1zM33 7h1v1h-1zM35 7h3v1h-3zM40 7h1v1h-1zM42 7h4v1h-4zM2 8h2v1h-2zM6 8h1v1h-1zM8 8h1v1h-1zM12 8h3v1h-3zM16 8h4v1h-4zM25 8h1v1h-1zM28 8h6v1h-6zM37 8h1v1h-1zM40 8h1v1h-1zM42 8h1v1h-1zM1 9h4v1h-4zM8 9h1v1h-1zM14 9h5v1h-5zM20 9h1v1h-1zM25 9h1v1h-1zM28 9h1v1h-1zM30 9h1v1h-1zM33 9h1v1h-1zM37 9h1v1h-1zM39 9h4v1h-4zM0 10h2v1h-2zM8 10h1v1h-1zM12 10h3v1h-3zM17 10h2v1h-2zM21 10h1v1h-1zM25 10h1v1h-1zM28 10h1v1h-1zM30 10h1v1h-1zM33 10h1v1h-1zM37 10h1v1h-1zM39 10h1v1h-1zM41 10h3v1h-3zM0 11h1v1h-1zM6 11h3v1h-3zM15 11h3v1h-3zM24 11h2v1h-2zM28 11h1v1h-1zM30 11h1v1h-1zM32 11h2v1h-2zM36 11h2v1h-2zM39 11h1v1h-1zM42 11h5v1h-5z"/></svg>
<svg style="left:446px;top:660px" width="47" height="12" viewBox="0 0 47 12" aria-label="对象追踪"><path fill="#000" d="M8 0h1v1h-1zM15 0h1v1h-1zM24 0h1v1h-1zM30 0h1v1h-1zM42 0h1v1h-1zM8 1h1v1h-1zM14 1h5v1h-5zM24 1h2v1h-2zM28 1h5v1h-5zM36 1h4v1h-4zM42 1h2v1h-2zM0 2h5v1h-5zM8 2h1v1h-1zM13 2h1v1h-1zM17 2h1v1h-1zM25 2h1v1h-1zM28 2h1v1h-1zM32 2h1v1h-1zM36 2h1v1h-1zM38 2h8v1h-8zM3 3h2v1h-2zM8 3h1v1h-1zM12 3h9v1h-9zM28 3h1v1h-1zM32 3h1v1h-1zM36 3h1v1h-1zM38 3h3v1h-3zM45 3h1v1h-1zM3 4h8v1h-8zM13 4h1v1h-1zM16 4h1v1h-1zM20 4h1v1h-1zM23 4h3v1h-3zM28 4h5v1h-5zM36 4h4v1h-4zM41 4h4v1h-4zM0 5h1v1h-1zM3 5h1v1h-1zM8 5h1v1h-1zM13 5h8v1h-8zM25 5h1v1h-1zM28 5h1v1h-1zM37 5h2v1h-2zM1 6h3v1h-3zM5 6h1v1h-1zM8 6h1v1h-1zM13 6h4v1h-4zM19 6h2v1h-2zM25 6h1v1h-1zM28 6h6v1h-6zM36 6h11v1h-11zM2 7h2v1h-2zM5 7h2v1h-2zM8 7h1v1h-1zM12 7h1v1h-1zM15 7h5v1h-5zM25 7h1v1h-1zM28 7h1v1h-1zM33 7h1v1h-1zM36 7h3v1h-3zM43 7h1v1h-1zM2 8h2v1h-2zM6 8h1v1h-1zM8 8h1v1h-1zM12 8h3v1h-3zM16 8h4v1h-4zM25 8h1v1h-1zM28 8h1v1h-1zM33 8h1v1h-1zM36 8h3v1h-3zM41 8h1v1h-1zM43 8h3v1h-3zM1 9h4v1h-4zM8 9h1v1h-1zM14 9h5v1h-5zM20 9h1v1h-1zM25 9h1v1h-1zM28 9h6v1h-6zM36 9h5v1h-5zM43 9h1v1h-1zM45 9h1v1h-1zM0 10h2v1h-2zM8 10h1v1h-1zM12 10h3v1h-3zM17 10h2v1h-2zM21 10h1v1h-1zM24 10h4v1h-4zM35 10h3v1h-3zM39 10h2v1h-2zM43 10h1v1h-1zM45 10h2v1h-2zM0 11h1v1h-1zM6 11h3v1h-3zM15 11h3v1h-3zM24 11h1v1h-1zM27 11h8v1h-8zM41 11h3v1h-3z"/></svg>
<svg style="left:502px;top:660px" width="23" height="12" viewBox="0 0 23 12" aria-label="线宽"><path fill="#000" d="M2 0h1v1h-1zM6 0h1v1h-1zM8 0h1v1h-1zM16 0h2v1h-2zM1 1h1v1h-1zM6 1h1v1h-1zM8 1h2v1h-2zM12 1h10v1h-10zM1 2h1v1h-1zM6 2h4v1h-4zM12 2h1v1h-1zM15 2h1v1h-1zM18 2h1v1h-1zM21 2h1v1h-1zM0 3h1v1h-1zM2 3h7v1h-7zM13 3h8v1h-8zM0 4h3v1h-3zM6 4h1v1h-1zM15 4h1v1h-1zM18 4h1v1h-1zM1 5h2v1h-2zM5 5h5v1h-5zM13 5h8v1h-8zM1 6h1v1h-1zM4 6h4v1h-4zM9 6h1v1h-1zM13 6h1v1h-1zM16 6h1v1h-1zM19 6h2v1h-2zM0 7h4v1h-4zM6 7h4v1h-4zM13 7h1v1h-1zM16 7h1v1h-1zM19 7h2v1h-2zM0 8h1v1h-1zM7 8h2v1h-2zM13 8h1v1h-1zM16 8h2v1h-2zM19 8h2v1h-2zM2 9h2v1h-2zM6 9h2v1h-2zM13 9h1v1h-1zM15 9h3v1h-3zM21 9h2v1h-2zM0 10h3v1h-3zM4 10h7v1h-7zM14 10h2v1h-2zM17 10h1v1h-1zM21 10h2v1h-2zM4 11h1v1h-1zM8 11h2v1h-2zM12 11h3v1h-3zM17 11h5v1h-5z"/></svg>
<svg style="left:533px;top:660px" width="24" height="12" viewBox="0 0 24 12" aria-label="模型"><path fill="#000" d="M2 0h1v1h-1zM6 0h1v1h-1zM9 0h1v1h-1zM13 0h6v1h-6zM22 0h1v1h-1zM2 1h1v1h-1zM4 1h7v1h-7zM14 1h1v1h-1zM16 1h2v1h-2zM19 1h2v1h-2zM22 1h1v1h-1zM2 2h1v1h-1zM6 2h1v1h-1zM9 2h1v1h-1zM14 2h1v1h-1zM16 2h2v1h-2zM19 2h2v1h-2zM22 2h1v1h-1zM0 3h4v1h-4zM5 3h6v1h-6zM13 3h8v1h-8zM22 3h1v1h-1zM2 4h1v1h-1zM5 4h1v1h-1zM10 4h1v1h-1zM14 4h1v1h-1zM16 4h2v1h-2zM19 4h2v1h-2zM22 4h1v1h-1zM1 5h3v1h-3zM5 5h6v1h-6zM14 5h1v1h-1zM16 5h2v1h-2zM22 5h1v1h-1zM1 6h10v1h-10zM13 6h1v1h-1zM16 6h2v1h-2zM20 6h3v1h-3zM1 7h2v1h-2zM7 7h1v1h-1zM17 7h2v1h-2zM0 8h1v1h-1zM2 8h1v1h-1zM4 8h7v1h-7zM14 8h8v1h-8zM2 9h1v1h-1zM6 9h3v1h-3zM17 9h2v1h-2zM2 10h1v1h-1zM5 10h2v1h-2zM9 10h2v1h-2zM17 10h2v1h-2zM2 11h1v1h-1zM4 11h2v1h-2zM10 11h1v1h-1zM12 11h12v1h-12z"/></svg>
<svg style="left:0px;top:0px" width="601" height="678" viewBox="0 0 601 678"><path d="M155 571H197.5L193 584.5H159.5Z" fill="#000"/><path d="M155.5 571L159.5 584.5M197 571L192.5 584.5" stroke="#666" stroke-width="1"/><path d="M196 571H241L237.5 583Q237 584.5 235.5 584.5H200Q198.5 584.5 198 583Z" fill="#cccccc" stroke="#000" stroke-width="1"/><path d="M241.5 571L237.5 584.5" stroke="#000"/><path d="M241.5 571H286L282.5 583Q282 584.5 280.5 584.5H245Q243.5 584.5 243 583Z" fill="#cccccc" stroke="#000" stroke-width="1"/><path d="M286.5 571L282.5 584.5" stroke="#000"/></svg>
<svg style="left:163px;top:572px" width="23" height="12" viewBox="0 0 23 12" aria-label="模型"><path fill="#fff" d="M1 0h2v1h-2zM5 0h2v1h-2zM8 0h2v1h-2zM21 0h2v1h-2zM1 1h2v1h-2zM5 1h6v1h-6zM13 1h7v1h-7zM21 1h2v1h-2zM1 2h2v1h-2zM4 2h6v1h-6zM13 2h4v1h-4zM18 2h2v1h-2zM21 2h2v1h-2zM0 3h11v1h-11zM13 3h7v1h-7zM21 3h2v1h-2zM1 4h2v1h-2zM4 4h2v1h-2zM8 4h2v1h-2zM13 4h7v1h-7zM21 4h2v1h-2zM1 5h9v1h-9zM12 5h2v1h-2zM15 5h2v1h-2zM21 5h2v1h-2zM0 6h6v1h-6zM8 6h2v1h-2zM12 6h2v1h-2zM15 6h2v1h-2zM21 6h2v1h-2zM0 7h3v1h-3zM4 7h5v1h-5zM16 7h2v1h-2zM1 8h2v1h-2zM6 8h2v1h-2zM9 8h2v1h-2zM16 8h2v1h-2zM20 8h2v1h-2zM1 9h2v1h-2zM4 9h6v1h-6zM14 9h7v1h-7zM1 10h2v1h-2zM5 10h2v1h-2zM8 10h2v1h-2zM13 10h10v1h-10zM1 11h5v1h-5zM9 11h2v1h-2z"/></svg>
<svg style="left:202px;top:572px" width="30" height="13" viewBox="0 0 30 13" aria-label="布局1"><path fill="#000" d="M4 0h1v1h-1zM3 1h1v1h-1zM9 1h1v1h-1zM1 2h8v1h-8zM13 2h8v1h-8zM2 3h1v1h-1zM13 3h1v1h-1zM20 3h1v1h-1zM26 3h1v1h-1zM2 4h1v1h-1zM5 4h1v1h-1zM13 4h8v1h-8zM24 4h3v1h-3zM1 5h8v1h-8zM13 5h1v1h-1zM26 5h1v1h-1zM0 6h1v1h-1zM2 6h1v1h-1zM5 6h1v1h-1zM8 6h1v1h-1zM13 6h9v1h-9zM26 6h1v1h-1zM2 7h1v1h-1zM5 7h1v1h-1zM8 7h1v1h-1zM13 7h1v1h-1zM18 7h1v1h-1zM21 7h1v1h-1zM26 7h1v1h-1zM2 8h1v1h-1zM5 8h1v1h-1zM8 8h1v1h-1zM13 8h1v1h-1zM15 8h4v1h-4zM21 8h1v1h-1zM26 8h1v1h-1zM2 9h1v1h-1zM5 9h1v1h-1zM8 9h1v1h-1zM13 9h1v1h-1zM15 9h1v1h-1zM18 9h1v1h-1zM21 9h1v1h-1zM26 9h1v1h-1zM2 10h1v1h-1zM5 10h1v1h-1zM8 10h1v1h-1zM12 10h1v1h-1zM15 10h1v1h-1zM18 10h1v1h-1zM21 10h1v1h-1zM24 10h6v1h-6zM5 11h1v1h-1zM12 11h1v1h-1zM15 11h4v1h-4zM20 11h1v1h-1zM19 12h2v1h-2z"/></svg>
<svg style="left:246px;top:572px" width="29" height="13" viewBox="0 0 29 13" aria-label="布局2"><path fill="#000" d="M4 0h1v1h-1zM3 1h1v1h-1zM9 1h1v1h-1zM1 2h8v1h-8zM13 2h8v1h-8zM2 3h1v1h-1zM13 3h1v1h-1zM20 3h1v1h-1zM25 3h3v1h-3zM2 4h1v1h-1zM5 4h1v1h-1zM13 4h8v1h-8zM24 4h1v1h-1zM28 4h1v1h-1zM1 5h8v1h-8zM13 5h1v1h-1zM28 5h1v1h-1zM0 6h1v1h-1zM2 6h1v1h-1zM5 6h1v1h-1zM8 6h1v1h-1zM13 6h9v1h-9zM27 6h2v1h-2zM2 7h1v1h-1zM5 7h1v1h-1zM8 7h1v1h-1zM13 7h1v1h-1zM18 7h1v1h-1zM21 7h1v1h-1zM26 7h2v1h-2zM2 8h1v1h-1zM5 8h1v1h-1zM8 8h1v1h-1zM13 8h1v1h-1zM15 8h4v1h-4zM21 8h1v1h-1zM25 8h1v1h-1zM2 9h1v1h-1zM5 9h1v1h-1zM8 9h1v1h-1zM13 9h1v1h-1zM15 9h1v1h-1zM18 9h1v1h-1zM21 9h1v1h-1zM24 9h1v1h-1zM2 10h1v1h-1zM5 10h1v1h-1zM8 10h1v1h-1zM12 10h1v1h-1zM15 10h1v1h-1zM18 10h1v1h-1zM21 10h1v1h-1zM24 10h5v1h-5zM5 11h1v1h-1zM12 11h1v1h-1zM15 11h4v1h-4zM20 11h1v1h-1zM19 12h2v1h-2z"/></svg>
<svg style="left:121px;top:96px" width="7" height="9" viewBox="0 0 7 9" aria-label="0"><path fill="#000" d="M2 0h3v1h-3zM1 1h1v1h-1zM5 1h1v1h-1zM1 2h1v1h-1zM5 2h1v1h-1zM1 3h1v1h-1zM5 3h1v1h-1zM0 4h2v1h-2zM5 4h2v1h-2zM1 5h1v1h-1zM5 5h1v1h-1zM1 6h1v1h-1zM5 6h1v1h-1zM1 7h1v1h-1zM5 7h1v1h-1zM2 8h3v1h-3z"/></svg>
<div style="left:107px;top:95px;width:10px;height:10px;background:#000000;"></div>
<div style="left:108px;top:96px;width:8px;height:8px;background:#ffffff;"></div>
<svg style="left:419px;top:96px" width="42" height="10" viewBox="0 0 42 10" aria-label="ByLayer"><path fill="#000" d="M0 0h5v1h-5zM12 0h4v1h-4zM1 1h1v1h-1zM5 1h1v1h-1zM14 1h1v1h-1zM1 2h1v1h-1zM5 2h4v1h-4zM10 2h3v1h-3zM14 2h1v1h-1zM19 2h4v1h-4zM24 2h3v1h-3zM28 2h3v1h-3zM32 2h3v1h-3zM37 2h2v1h-2zM40 2h2v1h-2zM1 3h1v1h-1zM5 3h1v1h-1zM7 3h1v1h-1zM11 3h1v1h-1zM14 3h1v1h-1zM23 3h1v1h-1zM25 3h1v1h-1zM29 3h1v1h-1zM31 3h1v1h-1zM35 3h1v1h-1zM38 3h2v1h-2zM2 4h4v1h-4zM8 4h1v1h-1zM10 4h1v1h-1zM14 4h1v1h-1zM17 4h1v1h-1zM19 4h5v1h-5zM26 4h1v1h-1zM28 4h1v1h-1zM31 4h5v1h-5zM38 4h1v1h-1zM1 5h1v1h-1zM5 5h1v1h-1zM8 5h1v1h-1zM10 5h1v1h-1zM14 5h1v1h-1zM17 5h1v1h-1zM19 5h1v1h-1zM23 5h1v1h-1zM26 5h1v1h-1zM28 5h1v1h-1zM31 5h1v1h-1zM38 5h1v1h-1zM1 6h1v1h-1zM5 6h1v1h-1zM9 6h1v1h-1zM14 6h1v1h-1zM17 6h1v1h-1zM19 6h1v1h-1zM22 6h2v1h-2zM27 6h1v1h-1zM31 6h1v1h-1zM35 6h1v1h-1zM38 6h1v1h-1zM0 7h6v1h-6zM9 7h1v1h-1zM12 7h6v1h-6zM19 7h6v1h-6zM27 7h1v1h-1zM32 7h4v1h-4zM37 7h4v1h-4zM8 8h1v1h-1zM26 8h1v1h-1zM7 9h2v1h-2zM25 9h2v1h-2z"/></svg>
<svg style="left:581px;top:68px" width="20" height="8" viewBox="0 0 20 8" aria-label="Sta"><path fill="#000" d="M1 0h4v1h-4zM8 0h1v1h-1zM0 1h1v1h-1zM4 1h1v1h-1zM8 1h1v1h-1zM0 2h1v1h-1zM7 2h5v1h-5zM14 2h5v1h-5zM1 3h3v1h-3zM8 3h1v1h-1zM18 3h1v1h-1zM4 4h1v1h-1zM8 4h1v1h-1zM15 4h4v1h-4zM0 5h1v1h-1zM5 5h1v1h-1zM8 5h1v1h-1zM14 5h1v1h-1zM18 5h1v1h-1zM0 6h2v1h-2zM5 6h1v1h-1zM9 6h1v1h-1zM12 6h1v1h-1zM14 6h1v1h-1zM18 6h1v1h-1zM0 7h5v1h-5zM9 7h3v1h-3zM14 7h4v1h-4zM19 7h1v1h-1z"/></svg>
</body></html>
